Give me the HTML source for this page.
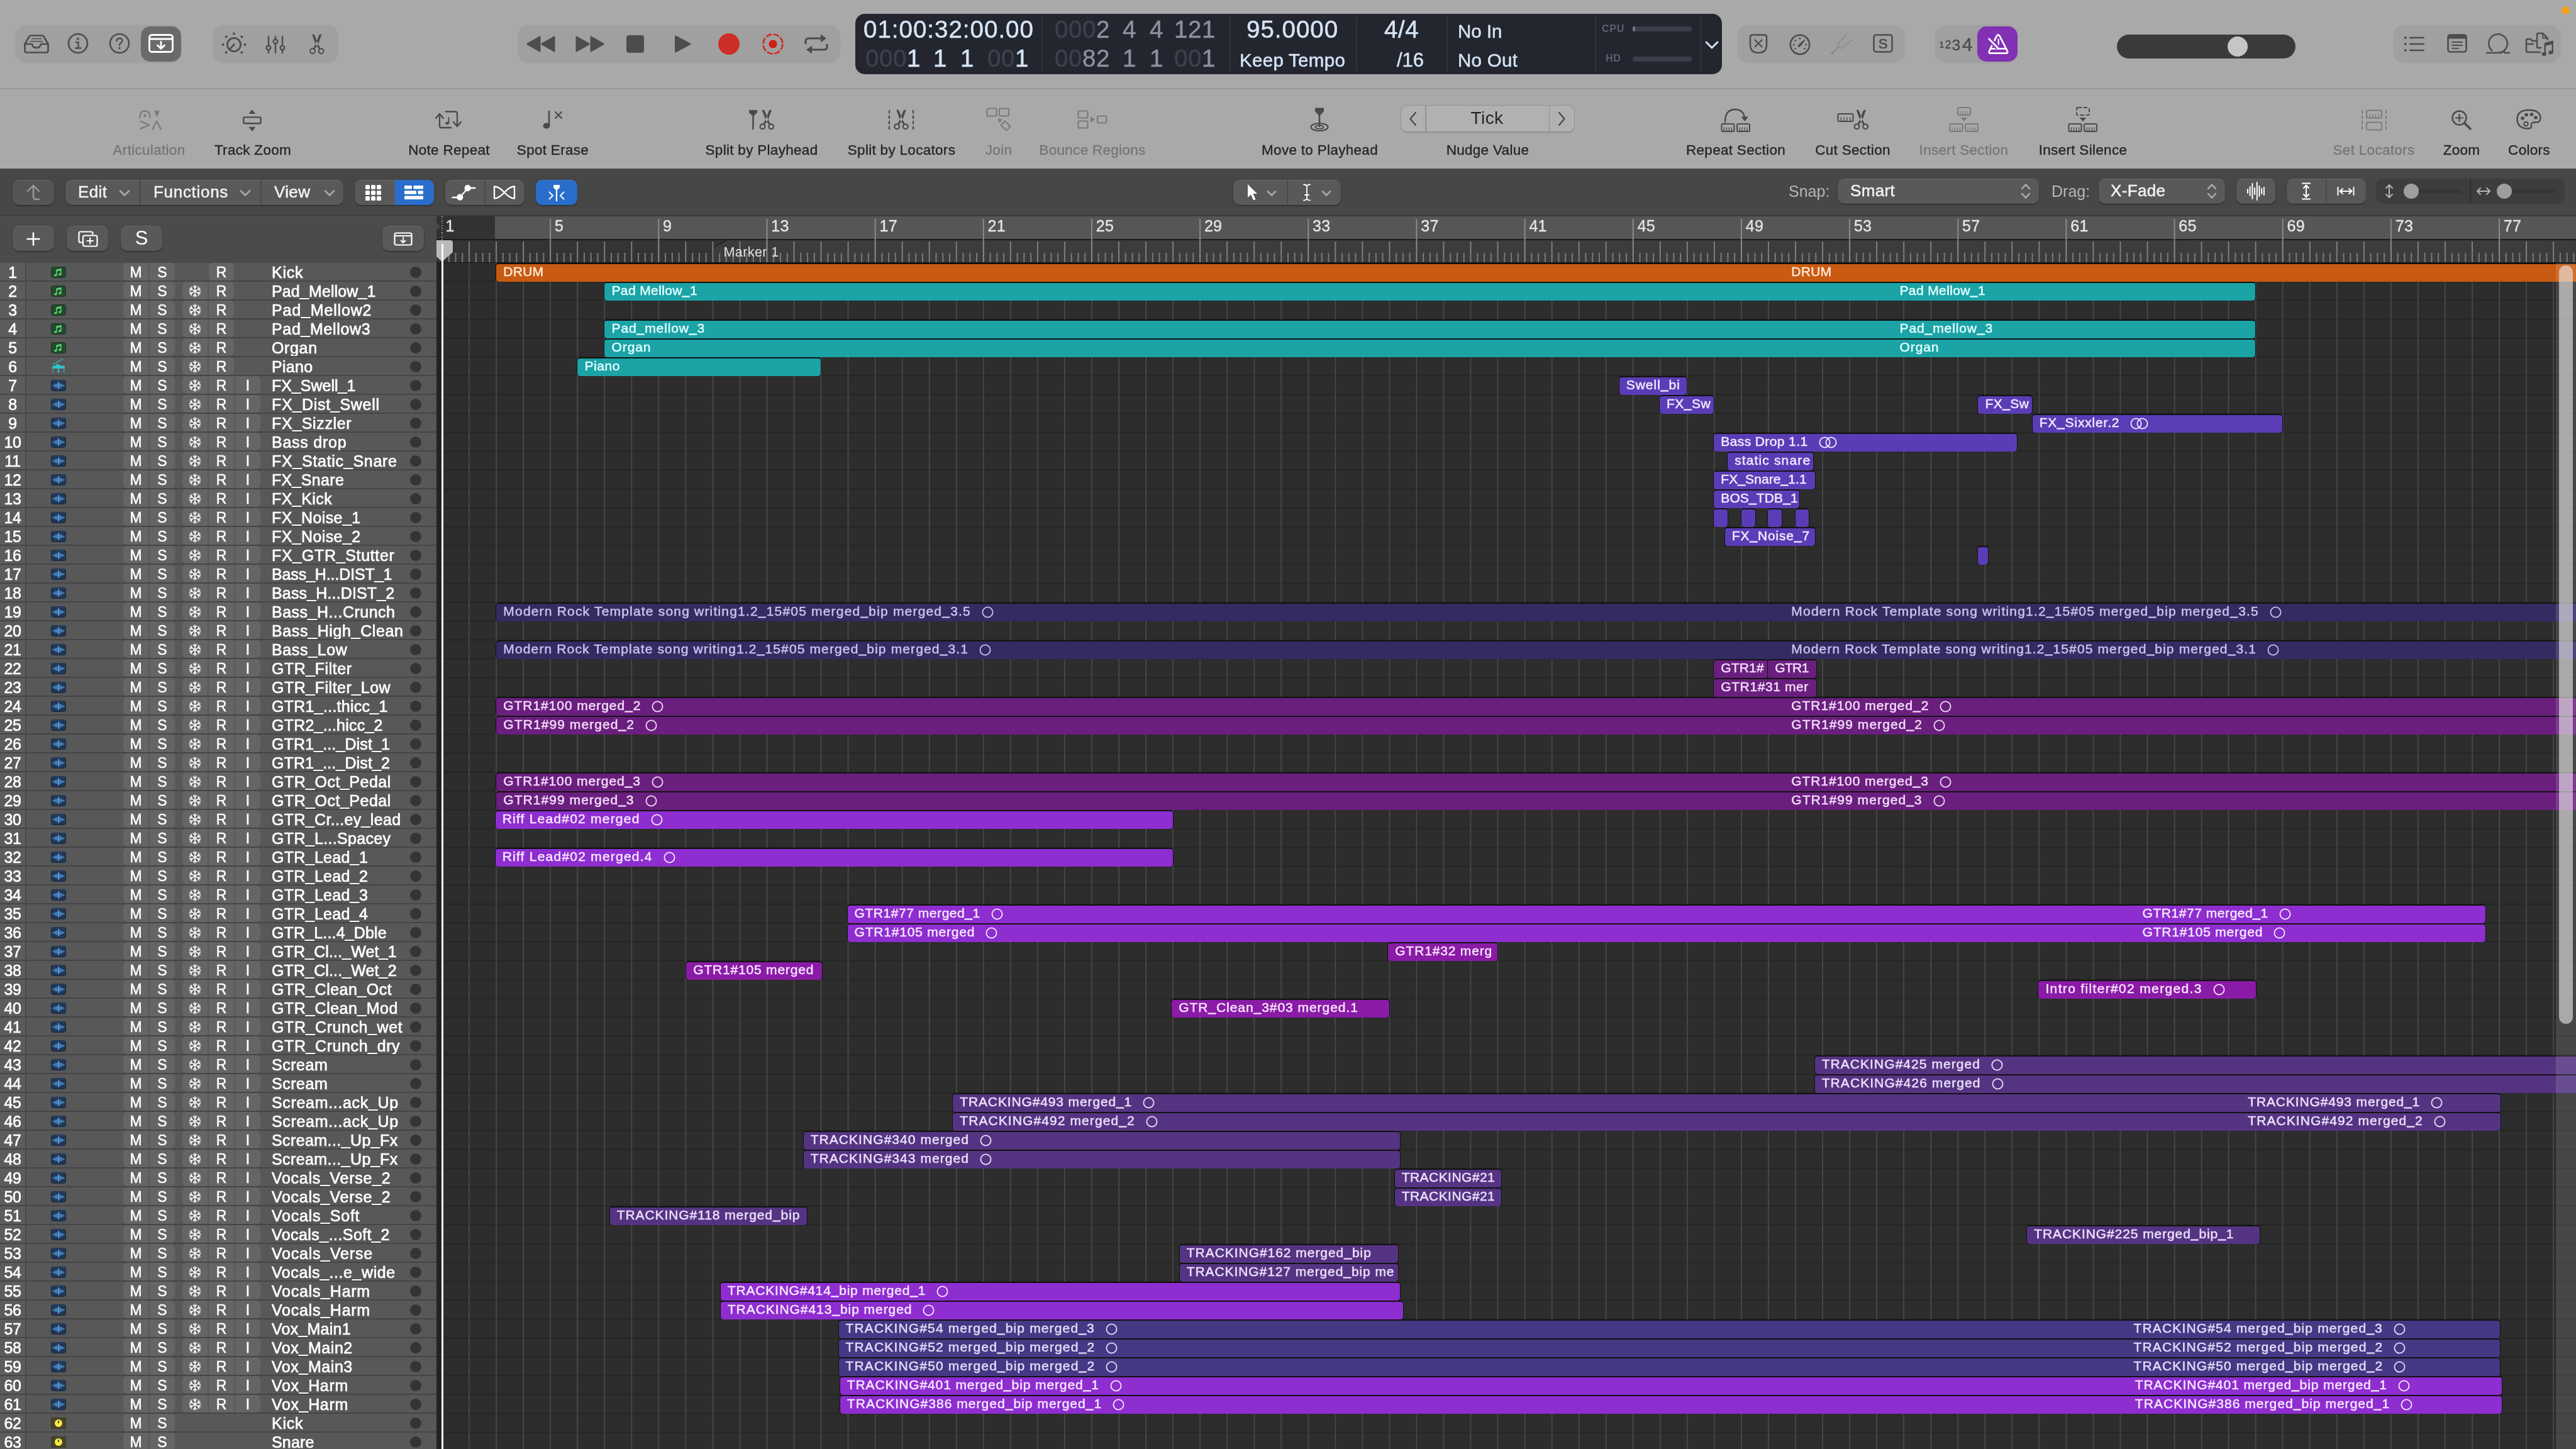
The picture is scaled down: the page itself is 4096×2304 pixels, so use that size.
<!DOCTYPE html>
<html><head><meta charset="utf-8"><title>Logic Pro</title>
<style>
*{box-sizing:border-box;margin:0;padding:0}
html,body{width:4096px;height:2304px;overflow:hidden;background:#2d2d2d}
body{font-family:"Liberation Sans",sans-serif;}
#root{position:relative;width:4096px;height:2304px;overflow:hidden;will-change:transform;transform:translateZ(0)}
.abs{position:absolute}
#top{position:absolute;left:0;top:0;width:4096px;height:268px;background:#a9a9a9}
#topline{position:absolute;left:0;top:140px;width:4096px;height:2px;background:#9a9a9a}
.grp{position:absolute;top:40px;height:60px;border-radius:17px;background:#a0a0a0;box-shadow:0 0 0 1px rgba(0,0,0,.025)}
.ico{position:absolute;overflow:visible}
.tl{-webkit-text-stroke:.35px currentColor;position:absolute;top:225px;font-size:22.5px;color:#262626;white-space:nowrap;transform:translateX(-50%);letter-spacing:.3px;line-height:28px}
.tl.dim{color:#767676}
#lcd{position:absolute;left:1360px;top:22px;width:1378px;height:96px;border-radius:15px;background:#23262f;overflow:hidden}
.lcdv{position:absolute;width:2px;top:4px;height:88px;background:#2f333d}
.big{-webkit-text-stroke:.5px currentColor;position:absolute;font-size:38.5px;line-height:40px;color:#d6e4f6;white-space:nowrap;letter-spacing:.6px}
.dg{-webkit-text-stroke:.5px currentColor;position:absolute;font-size:38.5px;line-height:40px;white-space:nowrap;text-align:right;letter-spacing:.6px}
.med{-webkit-text-stroke:.45px currentColor;position:absolute;font-size:29.5px;line-height:32px;color:#d6e4f6;white-space:nowrap}
.c1{color:#d6e4f6}.c2{color:#8b909e}.c0{color:#3d414c}
#mid{position:absolute;left:0;top:268px;width:4096px;height:75px;background:#474747}
.btn{position:absolute;background:#595959;border-radius:10px;box-shadow:0 1px 2px rgba(0,0,0,.5),inset 0 1px 0 rgba(255,255,255,.09)}
.mtxt{-webkit-text-stroke:.5px currentColor;position:absolute;font-size:26px;line-height:30px;color:#f2f2f2;white-space:nowrap;letter-spacing:.35px}
.lbl{position:absolute;font-size:25px;line-height:30px;color:#b5b5b5;white-space:nowrap}
#thead{position:absolute;left:0;top:343px;width:694px;height:75px;background:#4b4b4b}
#tlist{position:absolute;left:0;top:418px;width:694px;height:1886px;background:#585858;overflow:hidden}
.row{position:absolute;left:0;width:694px;height:30px}
.row:before{content:"";position:absolute;left:0;top:-2px;width:694px;height:2px;background:#454545}
.num{-webkit-text-stroke:.65px currentColor;position:absolute;left:0;top:0;width:42px;height:28px;background:#5c5c5c;border-right:2px solid #494949;color:#fff;font-size:25px;line-height:30px;text-align:center;letter-spacing:-.3px}
.b{-webkit-text-stroke:.5px currentColor;position:absolute;top:0;height:28px;background:#656565;color:#fff;font-size:23px;line-height:30px;text-align:center}
.nm{-webkit-text-stroke:.7px currentColor;position:absolute;left:432px;top:1px;font-size:25px;line-height:28px;color:#fff;white-space:nowrap;letter-spacing:.45px}
.u{position:relative;top:-1.500px;-webkit-text-stroke:.9px currentColor}
.rt .u{top:-1px;-webkit-text-stroke:.7px currentColor}
.dot{position:absolute;left:652px;top:6px;width:18px;height:18px;border-radius:50%;background:#343434}
.ti{position:absolute;left:81px;top:6px;width:24px;height:18px;border-radius:3px}
#arr{position:absolute;left:694px;top:418px;width:3402px;height:1886px;background:#2d2d2d;overflow:hidden}
#ruler{position:absolute;left:694px;top:343px;width:3402px;height:75px;background:#343434;overflow:hidden}
.rg{position:absolute;height:30px;border:1.5px solid #121212;border-top-width:2px;border-bottom-width:0;border-radius:5px;overflow:hidden;white-space:nowrap}
.rt{-webkit-text-stroke:.5px currentColor;position:absolute;top:-1px;font-size:21px;line-height:26px;white-space:nowrap;letter-spacing:.55px}
.rt svg{vertical-align:-3.500px;margin-left:17px}
.rn{-webkit-text-stroke:.4px currentColor;position:absolute;top:1px;font-size:25px;line-height:30px;color:#e4e4e4;letter-spacing:.3px}
</style></head><body><div id="root">
<div id="top"><div id="topline"></div><div class="grp" style="left:25px;width:263px"></div><div class="abs" style="left:224px;top:42px;width:64px;height:56px;border-radius:15px;background:#6a6a6a"></div><svg class="ico" style="left:36px;top:54px" width="44" height="32" viewBox="0 0 44 32" ><g fill="none" stroke="#4d4d4d" stroke-width="2.700" stroke-linejoin="round" stroke-linecap="round"><path d="M3.500 16 L10.500 4 Q11.500 2.500 13.500 2.500 L30.500 2.500 Q32.500 2.500 33.500 4 L40.500 16 L40.500 26.500 Q40.500 29.500 37.500 29.500 L6.500 29.500 Q3.500 29.500 3.500 26.500 Z"/><path d="M3.500 16 L15 16 Q16 22 22 22 Q28 22 29 16 L40.500 16"/><path d="M14.500 7.500 L29.500 7.500 M12 11.800 L32 11.800" stroke-width="1.600"/></g></svg><svg class="ico" style="left:106px;top:51px" width="36" height="36" viewBox="0 0 36 36" ><circle cx="18" cy="18" r="15" fill="none" stroke="#4d4d4d" stroke-width="2.600"/><circle cx="18" cy="10.800" r="2" fill="#4d4d4d"/><path d="M14.800 16.200 L18.600 16.200 L18.600 25 M14 25.500 L22.500 25.500" fill="none" stroke="#4d4d4d" stroke-width="2.400" stroke-linecap="round"/></svg><svg class="ico" style="left:172px;top:51px" width="36" height="36" viewBox="0 0 36 36" ><circle cx="18" cy="18" r="15" fill="none" stroke="#4d4d4d" stroke-width="2.600"/><path d="M13.500 14 Q13.800 10 18 10 Q22.500 10 22.500 13.600 Q22.500 16 20 17.500 Q18 18.700 18 21" fill="none" stroke="#4d4d4d" stroke-width="2.400" stroke-linecap="round"/><circle cx="18" cy="25.500" r="1.700" fill="#4d4d4d"/></svg><svg class="ico" style="left:235px;top:53px" width="42" height="32" viewBox="0 0 42 32" ><rect x="2.500" y="2.500" width="37" height="27" rx="4" fill="none" stroke="#fff" stroke-width="2.900"/><path d="M2.500 9 L39.500 9" stroke="#fff" stroke-width="2.800"/><path d="M21 13.500 L21 24 M15.500 19 L21 24.500 L26.500 19" fill="none" stroke="#fff" stroke-width="2.800" stroke-linecap="round" stroke-linejoin="round"/></svg><div class="grp" style="left:339px;width:198px"></div><svg class="ico" style="left:352px;top:49.5px" width="40" height="42" viewBox="0 0 40 42" ><circle cx="20" cy="21" r="10.600" fill="none" stroke="#4d4d4d" stroke-width="2.700"/><path d="M13.400 28 L20.500 20.500" stroke="#4d4d4d" stroke-width="2.600" stroke-linecap="round"/><circle cx="20.0" cy="3.5" r="2" fill="#4d4d4d"/><circle cx="32.4" cy="8.6" r="2" fill="#4d4d4d"/><circle cx="37.5" cy="21.0" r="2" fill="#4d4d4d"/><circle cx="32.4" cy="33.4" r="2" fill="#4d4d4d"/><circle cx="7.6" cy="33.4" r="2" fill="#4d4d4d"/><circle cx="2.5" cy="21.0" r="2" fill="#4d4d4d"/><circle cx="7.6" cy="8.6" r="2" fill="#4d4d4d"/></svg><svg class="ico" style="left:422px;top:55px" width="32" height="32" viewBox="0 0 32 32" ><g stroke="#4d4d4d" stroke-width="2.400" stroke-linecap="round" fill="#a3a3a3"><path d="M5 3 L5 29 M16 3 L16 29 M27 3 L27 29"/><circle cx="5" cy="21" r="3.300"/><circle cx="16" cy="11" r="3.300"/><circle cx="27" cy="21" r="3.300"/></g></svg><svg class="ico" style="left:490px;top:53px" width="28" height="34" viewBox="0 0 28 34" ><path d="M6 1.500 L10 2.200 L15.800 16.600 L19.500 24.200 L17.500 25.500 L11.900 18 Z M21.600 1.500 L17.600 2.200 L11.800 16.600 L8.100 24.200 L10.100 25.500 L15.700 18 Z" fill="#4d4d4d"/><circle cx="7" cy="28.200" r="3.900" fill="none" stroke="#4d4d4d" stroke-width="2.100"/><circle cx="20.600" cy="28.200" r="3.900" fill="none" stroke="#4d4d4d" stroke-width="2.100"/><circle cx="13.800" cy="17.300" r="0.900" fill="#a0a0a0"/></svg><div class="grp" style="left:824px;width:512px"></div><svg class="ico" style="left:836px;top:56px" width="48" height="28" viewBox="0 0 48 28" ><path d="M22 1.5 Q23.5 0.5 23.5 2.5 L23.5 25.5 Q23.5 27.5 22 26.5 L2 15.2 Q0.5 14 2 12.8 Z M45 1.5 Q46.5 0.5 46.5 2.5 L46.5 25.5 Q46.5 27.5 45 26.5 L25 15.2 Q23.5 14 25 12.8 Z" fill="#4d4d4d"/></svg><svg class="ico" style="left:914px;top:56px" width="48" height="28" viewBox="0 0 48 28" ><path d="M3 1.5 Q1.5 0.5 1.5 2.5 L1.5 25.5 Q1.5 27.5 3 26.5 L23 15.2 Q24.5 14 23 12.8 Z M26 1.5 Q24.5 0.5 24.5 2.5 L24.5 25.5 Q24.5 27.5 26 26.5 L46 15.2 Q47.5 14 46 12.8 Z" fill="#4d4d4d"/></svg><div class="abs" style="left:996px;top:56px;width:28px;height:28px;border-radius:4px;background:#4d4d4d"></div><svg class="ico" style="left:1072px;top:55px" width="28" height="30" viewBox="0 0 28 30" ><path d="M3 1.8 Q1 0.6 1 3 L1 27 Q1 29.4 3 28.2 L25.5 16.3 Q27.5 15 25.5 13.7 Z" fill="#4d4d4d"/></svg><div class="abs" style="left:1142px;top:53px;width:34px;height:34px;border-radius:50%;background:#cb2f28"></div><svg class="ico" style="left:1209.5px;top:51px" width="38" height="38" viewBox="0 0 38 38" ><circle cx="19" cy="19" r="15.5" fill="none" stroke="#cf2a22" stroke-width="2.6" stroke-dasharray="9.6 2.6"/><circle cx="19" cy="19" r="6.6" fill="#d01c14"/></svg><svg class="ico" style="left:1279px;top:54px" width="38" height="32" viewBox="0 0 38 32" ><g fill="none" stroke="#4d4d4d" stroke-width="3.2" stroke-linecap="round" stroke-linejoin="round"><path d="M2 15 L2 12 Q2 7 7 7 L30 7"/><path d="M36 17 L36 20 Q36 25 31 25 L8 25"/></g><path d="M26 0.5 L35 7 L26 13.5 Z M12 18.5 L3 25 L12 31.5 Z" fill="#4d4d4d"/></svg><div id="lcd"><div class="lcdv" style="left:296px"></div><div class="lcdv" style="left:595px"></div><div class="lcdv" style="left:796px"></div><div class="lcdv" style="left:940px"></div><div class="lcdv" style="left:1176px"></div><div class="lcdv" style="left:1343px"></div><div class="big" style="left:13px;top:5px;letter-spacing:1px">01:00:32:00.00</div><div class="dg" style="right:1274px;top:51px"><span class="c0">000</span><span class="c1">1</span></div><div class="dg" style="right:1232px;top:51px"><span class="c0"></span><span class="c1">1</span></div><div class="dg" style="right:1189px;top:51px"><span class="c0"></span><span class="c1">1</span></div><div class="dg" style="right:1102px;top:51px"><span class="c0">00</span><span class="c1">1</span></div><div class="dg" style="right:973px;top:5px"><span class="c0">000</span><span class="c2">2</span></div><div class="dg" style="right:931px;top:5px"><span class="c0"></span><span class="c2">4</span></div><div class="dg" style="right:888px;top:5px"><span class="c0"></span><span class="c2">4</span></div><div class="dg" style="right:805px;top:5px"><span class="c0"></span><span class="c2">121</span></div><div class="dg" style="right:973px;top:51px"><span class="c0">00</span><span class="c2">82</span></div><div class="dg" style="right:931px;top:51px"><span class="c0"></span><span class="c2">1</span></div><div class="dg" style="right:888px;top:51px"><span class="c0"></span><span class="c2">1</span></div><div class="dg" style="right:805px;top:51px"><span class="c0">00</span><span class="c2">1</span></div><div class="big" style="left:622px;top:5px;letter-spacing:1px">95.0000</div><div class="med" style="left:611px;top:57.500px;letter-spacing:.3px">Keep Tempo</div><div class="big" style="left:841px;top:5px">4/4</div><div class="med" style="left:861px;top:57.500px;font-size:31px">/16</div><div class="med" style="left:958px;top:11.500px">No In</div><div class="med" style="left:958px;top:57.500px;letter-spacing:.3px">No Out</div><div class="abs" style="left:1187px;top:15px;font-size:16px;font-weight:bold;color:#596073;letter-spacing:.8px">CPU</div><div class="abs" style="left:1193px;top:62px;font-size:16px;font-weight:bold;color:#596073;letter-spacing:.8px">HD</div><div class="abs" style="left:1236px;top:20px;width:94px;height:8px;border-radius:4px;background:#3a3e4b"></div><div class="abs" style="left:1236px;top:20px;width:4px;height:8px;border-radius:2px;background:#6b7489"></div><div class="abs" style="left:1236px;top:68px;width:94px;height:8px;border-radius:4px;background:#3a3e4b"></div><svg class="ico" style="left:1351px;top:43px" width="22" height="14" viewBox="0 0 22 14" ><path d="M2 2 L11 11 L20 2" fill="none" stroke="#d6e4f6" stroke-width="3" stroke-linecap="round" stroke-linejoin="round"/></svg></div><div class="grp" style="left:2763px;width:265px"></div><svg class="ico" style="left:2780px;top:53px" width="32" height="34" viewBox="0 0 32 34" ><path d="M3 6 Q3 2.500 6.500 2.500 L25.500 2.500 Q29 2.500 29 6 L29 18 Q29 31 16 31 Q3 31 3 18 Z" fill="none" stroke="#4d4d4d" stroke-width="2.500" stroke-linejoin="round"/><path d="M10.500 10.500 L21.500 21.500 M21.500 10.500 L10.500 21.500" stroke="#4d4d4d" stroke-width="2.200" stroke-linecap="round"/></svg><svg class="ico" style="left:2844px;top:53px" width="36" height="36" viewBox="0 0 36 36" ><circle cx="18" cy="18" r="15.200" fill="none" stroke="#4d4d4d" stroke-width="2.500"/><path d="M15.800 19.200 Q14.800 21.200 17 21 Q18.500 20.800 25.500 10.500 Q17 17.500 15.800 19.200 Z" fill="#4d4d4d" stroke="#4d4d4d" stroke-width="1.600" stroke-linejoin="round"/><circle cx="10.5" cy="24.3" r="1.400" fill="#4d4d4d"/><circle cx="8.2" cy="18.0" r="1.400" fill="#4d4d4d"/><circle cx="10.5" cy="11.7" r="1.400" fill="#4d4d4d"/><circle cx="18.0" cy="8.2" r="1.400" fill="#4d4d4d"/><circle cx="27.8" cy="18.0" r="1.400" fill="#4d4d4d"/><circle cx="25.5" cy="24.3" r="1.400" fill="#4d4d4d"/></svg><svg class="ico" style="left:2910px;top:51px" width="38" height="38" viewBox="0 0 38 38" ><g fill="none" stroke="#8e8e8e" stroke-linecap="round" stroke-linejoin="round"><path d="M3.500 33.500 L12.500 24.500" stroke-width="3"/><path d="M26 3 L12.500 19 L12.500 24.500 L19.500 25.500 L35 12" stroke-width="2.200"/></g><circle cx="3.500" cy="33.500" r="2.600" fill="#8e8e8e"/></svg><svg class="ico" style="left:2978px;top:54px" width="32" height="30" viewBox="0 0 32 30" ><rect x="1.500" y="1.500" width="29" height="27" rx="3.500" fill="none" stroke="#4d4d4d" stroke-width="2.500"/><text x="16" y="23" text-anchor="middle" font-family="Liberation Sans" font-size="22" fill="#4d4d4d" stroke="#4d4d4d" stroke-width=".700">S</text></svg><div class="grp" style="left:3077px;width:131px"></div><svg class="ico" style="left:3080px;top:50px" width="62" height="36" viewBox="0 0 62 36"><g font-family="Liberation Sans" fill="#4d4d4d" stroke="#4d4d4d" stroke-width=".5" text-anchor="middle"><text x="7.300" y="26.300" font-size="15">1</text><text x="17.600" y="26.600" font-size="17.500">2</text><text x="30.500" y="29.500" font-size="24">3</text><text x="48" y="31.300" font-size="30">4</text></g></svg><div class="abs" style="left:3144px;top:42px;width:64px;height:56px;border-radius:15px;background:#8230b4"></div><svg class="ico" style="left:3158px;top:53px" width="36" height="34" viewBox="0 0 36 34" ><g fill="none" stroke="#fff" stroke-width="2.700" stroke-linecap="round" stroke-linejoin="round"><path d="M16.800 4.400 Q19.200 0.200 21.600 4.400 L33.600 27.800 Q35.400 31.700 31.200 31.700 L7.600 31.700 Q3.400 31.700 5.200 27.800 Z"/><path d="M7 24.500 L32 24.500"/><path d="M4.600 8.700 L18.600 23" stroke="#8230b4" stroke-width="7" stroke-linecap="butt"/><path d="M4.600 8.700 L19.500 24"/><path d="M19.600 9.500 L19.800 17.500" stroke-width="2.200"/></g></svg><div class="abs" style="left:3366px;top:55px;width:284px;height:38px;border-radius:19px;background:#3a3a3a"></div><div class="abs" style="left:3542px;top:58px;width:32px;height:32px;border-radius:50%;background:#c5c5c5"></div><div class="abs" style="left:4073px;top:10px;width:13px;height:13px;border-radius:50%;background:#f5a11f"></div><div class="grp" style="left:3806px;width:265px"></div><svg class="ico" style="left:3822px;top:57px" width="34" height="26" viewBox="0 0 34 26" ><g stroke="#4d4d4d" stroke-width="2.300" stroke-linecap="round"><path d="M10 3 L32 3 M10 13 L32 13 M10 23 L32 23"/></g><circle cx="2.800" cy="3" r="2" fill="#4d4d4d"/><circle cx="2.800" cy="13" r="2" fill="#4d4d4d"/><circle cx="2.800" cy="23" r="2" fill="#4d4d4d"/></svg><svg class="ico" style="left:3891px;top:54px" width="32" height="30" viewBox="0 0 32 30" ><rect x="1.500" y="1.500" width="29" height="27" rx="3.500" fill="none" stroke="#4d4d4d" stroke-width="2.600"/><path d="M1.500 4 Q1.500 1.500 4 1.500 L28 1.500 Q30.500 1.500 30.500 4 L30.500 7.500 L1.500 7.500 Z" fill="#4d4d4d"/><path d="M7.500 13 L25 13 M7.500 18 L25 18 M7.500 22.800 L19 22.800" stroke="#4d4d4d" stroke-width="1.800"/></svg><svg class="ico" style="left:3952px;top:52px" width="40" height="34" viewBox="0 0 40 34" ><g fill="none" stroke="#4d4d4d" stroke-width="2.500" stroke-linecap="round"><path d="M2 32 L20 32 A14.800 14.800 0 1 0 10.500 28.500"/><path d="M20 32 Q27 32 30 29"/><path d="M30.500 32 L38 32"/></g></svg><svg class="ico" style="left:4015px;top:50px" width="46" height="40" viewBox="0 0 46 40" ><g fill="none" stroke="#4d4d4d" stroke-width="2.500" stroke-linejoin="round" stroke-linecap="round"><path d="M19 24 L19 5 Q19 3 21 3 L28 3 L35.500 10.500 L35.500 13"/><path d="M28 3 L28 10.500 L35.500 10.500" stroke-width="1.800"/><path d="M19 24 Q19 26 21 26 L25 26"/><path d="M24 33 L4 33 Q2 33 2 31 L2 14 Q2 12 4 12 L9 12 L11 15 L18 15"/><path d="M2 20 L13 20"/></g><g fill="#4d4d4d"><ellipse cx="30.300" cy="36" rx="3.700" ry="3"/><ellipse cx="40.800" cy="33.500" rx="3.700" ry="3"/><path d="M32.500 36 L32.500 22.500 L43 19.800 L43 33.500 L44.500 33.500 L44.500 15 L31 18.500 L31 36 Z" stroke="#4d4d4d" stroke-width="1"/></g></svg><div class="tl dim" style="left:237px">Articulation</div><div class="tl" style="left:402px">Track Zoom</div><div class="tl" style="left:714px">Note Repeat</div><div class="tl" style="left:879px">Spot Erase</div><div class="tl" style="left:1211px">Split by Playhead</div><div class="tl" style="left:1433.5px">Split by Locators</div><div class="tl dim" style="left:1588px">Join</div><div class="tl dim" style="left:1737px">Bounce Regions</div><div class="tl" style="left:2098.5px">Move to Playhead</div><div class="tl" style="left:2365.5px">Nudge Value</div><div class="tl" style="left:2760px">Repeat Section</div><div class="tl" style="left:2946px">Cut Section</div><div class="tl dim" style="left:3122.5px">Insert Section</div><div class="tl" style="left:3312px">Insert Silence</div><div class="tl dim" style="left:3774.5px">Set Locators</div><div class="tl" style="left:3914px">Zoom</div><div class="tl" style="left:4021.5px">Colors</div><svg class="ico" style="left:216px;top:171px" width="42" height="38" viewBox="0 0 42 38" ><g fill="none" stroke="#7b7b7b" stroke-width="2.300" stroke-linecap="round" stroke-linejoin="round"><path d="M6.400 16 Q6.400 5.400 14.500 5.400 Q22.500 5.400 22.500 16"/><path d="M7.400 21.800 L21.300 27.700 L7.400 33.600"/><path d="M26.600 34.400 L33.200 21.400 L39.800 34.400"/></g><circle cx="14.400" cy="13" r="2.200" fill="#7b7b7b"/><path d="M29.100 5.300 L37.800 5.300 L33.500 15.300 Z" fill="#7b7b7b"/></svg><svg class="ico" style="left:385px;top:172px" width="32" height="38" viewBox="0 0 32 38" ><rect x="2.300" y="14.400" width="27.300" height="9.900" rx="2" fill="none" stroke="#4a4a4a" stroke-width="2.400"/><path d="M15.900 3 L20.600 8.500 L11.200 8.500 Z M15.900 36.200 L20.600 30.200 L11.200 30.200 Z" fill="#4a4a4a" stroke="#4a4a4a" stroke-width="1" stroke-linejoin="round"/></svg><svg class="ico" style="left:691px;top:175px" width="44" height="32" viewBox="0 0 44 32" ><g fill="none" stroke="#4a4a4a" stroke-width="2.300" stroke-linecap="round" stroke-linejoin="round"><path d="M8 8 L8 25 Q8 28 11 28 L26 28"/><path d="M2 13 L8 6 L14 13"/><path d="M36 24 L36 5.500 Q36 2.500 33 2.500 L17.500 2.500"/><path d="M30 19 L36 26 L42 19"/></g><ellipse cx="20" cy="21" rx="2.800" ry="2.200" fill="#4a4a4a"/><path d="M22.500 21 L22.500 11" stroke="#4a4a4a" stroke-width="1.800"/></svg><svg class="ico" style="left:862px;top:174px" width="34" height="32" viewBox="0 0 34 32" ><ellipse cx="7" cy="26" rx="5.500" ry="4.500" fill="#4a4a4a"/><path d="M11 26 L11 3" stroke="#4a4a4a" stroke-width="2.600" stroke-linecap="round"/><path d="M21 4 L31 14 M31 4 L21 14" stroke="#4a4a4a" stroke-width="2.200" stroke-linecap="round"/></svg><svg class="ico" style="left:1190px;top:173px" width="42" height="34" viewBox="0 0 42 34" ><path d="M1 2 L14 2 L14 6 L9 11 L6 11 L1 6 Z" fill="#4a4a4a"/><path d="M7.500 8 L7.500 32" stroke="#4a4a4a" stroke-width="2.600" stroke-linecap="round"/><g transform="translate(15.5 0) scale(1)"><path d="M6 1.500 L10 2.200 L15.800 16.600 L19.500 24.200 L17.500 25.500 L11.900 18 Z M21.600 1.500 L17.600 2.200 L11.800 16.600 L8.100 24.200 L10.100 25.500 L15.700 18 Z" fill="#4a4a4a"/><circle cx="7" cy="28.200" r="3.900" fill="none" stroke="#4a4a4a" stroke-width="2.200"/><circle cx="20.600" cy="28.200" r="3.900" fill="none" stroke="#4a4a4a" stroke-width="2.200"/></g></svg><svg class="ico" style="left:1412px;top:173px" width="42" height="34" viewBox="0 0 42 34" ><path d="M2 2 L2 33 M40 2 L40 33" stroke="#4a4a4a" stroke-width="2.200" stroke-dasharray="5.500 3"/><g transform="translate(7.2 0) scale(1)"><path d="M6 1.500 L10 2.200 L15.800 16.600 L19.500 24.200 L17.500 25.500 L11.900 18 Z M21.600 1.500 L17.600 2.200 L11.800 16.600 L8.100 24.200 L10.100 25.500 L15.700 18 Z" fill="#4a4a4a"/><circle cx="7" cy="28.200" r="3.900" fill="none" stroke="#4a4a4a" stroke-width="2.200"/><circle cx="20.600" cy="28.200" r="3.900" fill="none" stroke="#4a4a4a" stroke-width="2.200"/></g></svg><svg class="ico" style="left:1568px;top:171px" width="40" height="38" viewBox="0 0 40 38" ><g fill="none" stroke="#7b7b7b" stroke-width="2.200" stroke-linejoin="round"><rect x="1.500" y="1.500" width="15" height="12" rx="2"/><rect x="21" y="1.500" width="15" height="12" rx="2"/><path d="M30 21.500 L38.500 30 L32 36.500 L23.500 28 Z"/></g><path d="M18 17 L26 19 L21 24.500 Z" fill="#7b7b7b"/></svg><svg class="ico" style="left:1713px;top:175px" width="48" height="30" viewBox="0 0 48 30" ><g fill="none" stroke="#7b7b7b" stroke-width="2.200" stroke-linejoin="round"><rect x="1.500" y="1.500" width="15" height="11" rx="2"/><rect x="1.500" y="17.500" width="15" height="11" rx="2"/><rect x="32" y="9.500" width="14.500" height="11" rx="2"/></g><path d="M21 10 L28 15 L21 20 Z" fill="#7b7b7b"/></svg><svg class="ico" style="left:2082px;top:170px" width="32" height="40" viewBox="0 0 32 40" ><path d="M9 1.500 L23 1.500 L23 7 L18 12.500 L14 12.500 L9 7 Z" fill="#4a4a4a"/><path d="M16 10 L16 32" stroke="#4a4a4a" stroke-width="2.600"/><ellipse cx="16" cy="32" rx="13.500" ry="6" fill="none" stroke="#4a4a4a" stroke-width="2.200"/><ellipse cx="16" cy="32" rx="6.500" ry="2.800" fill="none" stroke="#4a4a4a" stroke-width="1.800"/></svg><div class="abs" style="left:2228px;top:168px;width:275px;height:41px;border-radius:9px;background:#b1b1b1;box-shadow:0 0 0 1px #929292,0 1.500px 2px rgba(0,0,0,.18)"></div><div class="abs" style="left:2266px;top:168px;width:1.500px;height:41px;background:#8f8f8f"></div><div class="abs" style="left:2462.500px;top:168px;width:1.500px;height:41px;background:#8f8f8f"></div><div class="abs" style="left:2266px;top:172px;width:197px;text-align:center;font-size:28px;line-height:32px;color:#262626;letter-spacing:.4px">Tick</div><svg class="ico" style="left:2240px;top:176.5px" width="14" height="24" viewBox="0 0 14 24" ><path d="M11 2 L2.500 12 L11 22" fill="none" stroke="#4a4a4a" stroke-width="2.200" stroke-linecap="round" stroke-linejoin="round"/></svg><svg class="ico" style="left:2476px;top:176.5px" width="14" height="24" viewBox="0 0 14 24" ><path d="M3 2 L11.500 12 L3 22" fill="none" stroke="#4a4a4a" stroke-width="2.200" stroke-linecap="round" stroke-linejoin="round"/></svg><svg class="ico" style="left:2736px;top:170px" width="48" height="40" viewBox="0 0 48 40" ><path d="M7 24 Q7 4 23 4 Q36 4 38 17" fill="none" stroke="#4a4a4a" stroke-width="2.400" stroke-linecap="round"/><path d="M32.500 15.500 L44 15.500 L38.500 23 Z" fill="#4a4a4a"/><rect x="1.5" y="27" width="20" height="12" rx="2" fill="none" stroke="#4a4a4a" stroke-width="2"/><path d="M5.5 32.5 L5.5 39" stroke="#4a4a4a" stroke-width="1.300"/><path d="M9.5 32.5 L9.5 39" stroke="#4a4a4a" stroke-width="1.300"/><path d="M13.5 32.5 L13.5 39" stroke="#4a4a4a" stroke-width="1.300"/><path d="M17.5 32.5 L17.5 39" stroke="#4a4a4a" stroke-width="1.300"/><rect x="26" y="27" width="20" height="12" rx="2" fill="none" stroke="#4a4a4a" stroke-width="2"/><path d="M30.0 32.5 L30.0 39" stroke="#4a4a4a" stroke-width="1.300"/><path d="M34.0 32.5 L34.0 39" stroke="#4a4a4a" stroke-width="1.300"/><path d="M38.0 32.5 L38.0 39" stroke="#4a4a4a" stroke-width="1.300"/><path d="M42.0 32.5 L42.0 39" stroke="#4a4a4a" stroke-width="1.300"/></svg><svg class="ico" style="left:2921px;top:173px" width="50" height="34" viewBox="0 0 50 34" ><rect x="1.5" y="8" width="24" height="12" rx="2" fill="none" stroke="#4a4a4a" stroke-width="2"/><path d="M6.3 13.5 L6.3 20" stroke="#4a4a4a" stroke-width="1.300"/><path d="M11.1 13.5 L11.1 20" stroke="#4a4a4a" stroke-width="1.300"/><path d="M15.9 13.5 L15.9 20" stroke="#4a4a4a" stroke-width="1.300"/><path d="M20.7 13.5 L20.7 20" stroke="#4a4a4a" stroke-width="1.300"/><g transform="translate(24.5 0) scale(1)"><path d="M6 1.500 L10 2.200 L15.800 16.600 L19.500 24.200 L17.500 25.500 L11.900 18 Z M21.600 1.500 L17.600 2.200 L11.800 16.600 L8.100 24.200 L10.100 25.500 L15.700 18 Z" fill="#4a4a4a"/><circle cx="7" cy="28.200" r="3.900" fill="none" stroke="#4a4a4a" stroke-width="2.200"/><circle cx="20.600" cy="28.200" r="3.900" fill="none" stroke="#4a4a4a" stroke-width="2.200"/></g></svg><svg class="ico" style="left:3099px;top:170px" width="48" height="40" viewBox="0 0 48 40" ><rect x="14" y="1" width="20" height="12" rx="2" fill="none" stroke="#7b7b7b" stroke-width="2"/><path d="M18.0 6.5 L18.0 13" stroke="#7b7b7b" stroke-width="1.300"/><path d="M22.0 6.5 L22.0 13" stroke="#7b7b7b" stroke-width="1.300"/><path d="M26.0 6.5 L26.0 13" stroke="#7b7b7b" stroke-width="1.300"/><path d="M30.0 6.5 L30.0 13" stroke="#7b7b7b" stroke-width="1.300"/><path d="M18.500 17 L29.500 17 L24 23 Z" fill="#7b7b7b"/><rect x="1.5" y="27" width="20" height="12" rx="2" fill="none" stroke="#7b7b7b" stroke-width="2"/><path d="M5.5 32.5 L5.5 39" stroke="#7b7b7b" stroke-width="1.300"/><path d="M9.5 32.5 L9.5 39" stroke="#7b7b7b" stroke-width="1.300"/><path d="M13.5 32.5 L13.5 39" stroke="#7b7b7b" stroke-width="1.300"/><path d="M17.5 32.5 L17.5 39" stroke="#7b7b7b" stroke-width="1.300"/><rect x="26" y="27" width="20" height="12" rx="2" fill="none" stroke="#7b7b7b" stroke-width="2"/><path d="M30.0 32.5 L30.0 39" stroke="#7b7b7b" stroke-width="1.300"/><path d="M34.0 32.5 L34.0 39" stroke="#7b7b7b" stroke-width="1.300"/><path d="M38.0 32.5 L38.0 39" stroke="#7b7b7b" stroke-width="1.300"/><path d="M42.0 32.5 L42.0 39" stroke="#7b7b7b" stroke-width="1.300"/></svg><svg class="ico" style="left:3288px;top:170px" width="48" height="40" viewBox="0 0 48 40" ><rect x="14" y="1" width="20" height="12" rx="2" fill="none" stroke="#4a4a4a" stroke-width="2" stroke-dasharray="6 3"/><path d="M18.500 17 L29.500 17 L24 23 Z" fill="#4a4a4a"/><rect x="1.5" y="27" width="20" height="12" rx="2" fill="none" stroke="#4a4a4a" stroke-width="2"/><path d="M5.5 32.5 L5.5 39" stroke="#4a4a4a" stroke-width="1.300"/><path d="M9.5 32.5 L9.5 39" stroke="#4a4a4a" stroke-width="1.300"/><path d="M13.5 32.5 L13.5 39" stroke="#4a4a4a" stroke-width="1.300"/><path d="M17.5 32.5 L17.5 39" stroke="#4a4a4a" stroke-width="1.300"/><rect x="26" y="27" width="20" height="12" rx="2" fill="none" stroke="#4a4a4a" stroke-width="2"/><path d="M30.0 32.5 L30.0 39" stroke="#4a4a4a" stroke-width="1.300"/><path d="M34.0 32.5 L34.0 39" stroke="#4a4a4a" stroke-width="1.300"/><path d="M38.0 32.5 L38.0 39" stroke="#4a4a4a" stroke-width="1.300"/><path d="M42.0 32.5 L42.0 39" stroke="#4a4a4a" stroke-width="1.300"/></svg><svg class="ico" style="left:3754px;top:174px" width="42" height="34" viewBox="0 0 42 34" ><path d="M2 1 L2 33 M40 1 L40 33" stroke="#7b7b7b" stroke-width="2" stroke-dasharray="5.500 3"/><rect x="9" y="1.5" width="24" height="12" rx="2" fill="none" stroke="#7b7b7b" stroke-width="2"/><path d="M13.8 7 L13.8 13.5" stroke="#7b7b7b" stroke-width="1.300"/><path d="M18.6 7 L18.6 13.5" stroke="#7b7b7b" stroke-width="1.300"/><path d="M23.4 7 L23.4 13.5" stroke="#7b7b7b" stroke-width="1.300"/><path d="M28.2 7 L28.2 13.5" stroke="#7b7b7b" stroke-width="1.300"/><rect x="9" y="20.500" width="24" height="12" rx="2" fill="none" stroke="#7b7b7b" stroke-width="1.800"/></svg><svg class="ico" style="left:3897px;top:174px" width="34" height="34" viewBox="0 0 34 34" ><circle cx="13.500" cy="13.500" r="11" fill="none" stroke="#4a4a4a" stroke-width="2.400"/><path d="M22 22 L31 31" stroke="#4a4a4a" stroke-width="3.400" stroke-linecap="round"/><path d="M13.500 8 L13.500 19 M8 13.500 L19 13.500" stroke="#4a4a4a" stroke-width="2.200" stroke-linecap="round"/></svg><svg class="ico" style="left:4000px;top:173px" width="42" height="34" viewBox="0 0 42 34" ><path d="M21 2 Q3 2 2.500 16 Q2.500 31 19 31.500 Q26 31.500 25 26.500 Q24 21.500 30 21.500 L34 21.500 Q39.500 21 39.500 14 Q38.500 2 21 2 Z" fill="none" stroke="#4a4a4a" stroke-width="2.400"/><circle cx="11" cy="15" r="2.800" fill="#4a4a4a"/><circle cx="17" cy="9.500" r="2.800" fill="#4a4a4a"/><circle cx="25.500" cy="9" r="2.800" fill="#4a4a4a"/><circle cx="32" cy="14" r="2.800" fill="#4a4a4a"/><circle cx="16.500" cy="24" r="3.200" fill="none" stroke="#4a4a4a" stroke-width="2"/></svg></div><div id="mid"><div class="btn" style="left:20px;top:18px;width:66px;height:40px;background:#555"></div><svg class="ico" style="left:41px;top:25px" width="24" height="26" viewBox="0 0 24 26" ><path d="M12 2 L12 19 Q12 24 17 24 L21 24 M3 11 L12 2 L21 11" fill="none" stroke="#9a9a9a" stroke-width="2.400" stroke-linecap="round" stroke-linejoin="round"/></svg><div class="btn" style="left:104px;top:18px;width:442px;height:40px"></div><div class="abs" style="left:222px;top:18px;width:2px;height:40px;background:#4a4a4a"></div><div class="abs" style="left:414px;top:18px;width:2px;height:40px;background:#4a4a4a"></div><div class="mtxt" style="left:124px;top:22px">Edit</div><div class="mtxt" style="left:244px;top:22px;letter-spacing:.7px">Functions</div><div class="mtxt" style="left:436px;top:22px">View</div><svg class="ico" style="left:189px;top:34px" width="18" height="10" viewBox="0 0 18 10" ><path d="M2 1.500 L9 8.5 L16 1.500" fill="none" stroke="#a8a8a8" stroke-width="2.6" stroke-linecap="round" stroke-linejoin="round"/></svg><svg class="ico" style="left:381px;top:34px" width="18" height="10" viewBox="0 0 18 10" ><path d="M2 1.500 L9 8.5 L16 1.500" fill="none" stroke="#a8a8a8" stroke-width="2.6" stroke-linecap="round" stroke-linejoin="round"/></svg><svg class="ico" style="left:514.5px;top:34px" width="18" height="10" viewBox="0 0 18 10" ><path d="M2 1.500 L9 8.5 L16 1.500" fill="none" stroke="#a8a8a8" stroke-width="2.6" stroke-linecap="round" stroke-linejoin="round"/></svg><div class="btn" style="left:564px;top:18px;width:126px;height:40px"></div><div class="abs" style="left:627.500px;top:18px;width:62.500px;height:40px;border-radius:0 10px 10px 0;background:#2a6ecb"></div><svg class="ico" style="left:581px;top:25.5px" width="25" height="25" viewBox="0 0 25 25" ><rect x="0" y="0" width="7" height="7" rx="1.500" fill="#fff"/><rect x="9" y="0" width="7" height="7" rx="1.500" fill="#fff"/><rect x="18" y="0" width="7" height="7" rx="1.500" fill="#fff"/><rect x="0" y="9" width="7" height="7" rx="1.500" fill="#fff"/><rect x="9" y="9" width="7" height="7" rx="1.500" fill="#fff"/><rect x="18" y="9" width="7" height="7" rx="1.500" fill="#fff"/><rect x="0" y="18" width="7" height="7" rx="1.500" fill="#fff"/><rect x="9" y="18" width="7" height="7" rx="1.500" fill="#fff"/><rect x="18" y="18" width="7" height="7" rx="1.500" fill="#fff"/></svg><svg class="ico" style="left:642.5px;top:27px" width="30" height="22" viewBox="0 0 30 22" ><g fill="#fff"><rect x="0" y="0" width="12" height="5.500" rx="1"/><rect x="14.500" y="0" width="15.500" height="5.500" rx="1"/><rect x="0" y="8.200" width="19" height="5.500" rx="1"/><rect x="21.500" y="8.200" width="8.500" height="5.500" rx="1"/><rect x="0" y="16.500" width="30" height="5.500" rx="1"/></g></svg><div class="btn" style="left:708px;top:18px;width:126px;height:40px"></div><div class="abs" style="left:770px;top:18px;width:2px;height:40px;background:#4a4a4a"></div><svg class="ico" style="left:718px;top:26px" width="40" height="24" viewBox="0 0 40 24" style="overflow:visible"><path d="M1.500 20 L9 20 M16 16.500 L23 8.500 M30 5 L37.500 5" stroke="#fff" stroke-width="2.300" stroke-linecap="round"/><circle cx="13.300" cy="19.600" r="5.100" fill="#fff"/><circle cx="25.600" cy="5.200" r="5.100" fill="#fff"/></svg><svg class="ico" style="left:784px;top:27px" width="36" height="22" viewBox="0 0 36 22" ><path d="M2 1.500 L2 20.500 M34 1.500 L34 20.500 M2 20.500 C15 20.500 21 1.500 34 1.500 M2 1.500 C15 1.500 21 20.500 34 20.500" fill="none" stroke="#fff" stroke-width="2.300" stroke-linejoin="round" stroke-linecap="round"/></svg><div class="btn" style="left:852px;top:18px;width:66px;height:40px;background:#2a6ecb"></div><svg class="ico" style="left:870px;top:25px" width="30" height="28" viewBox="0 0 30 28" ><path d="M10 1 L20 1 L20 5 L16.500 9 L13.500 9 L10 5 Z" fill="#fff"/><path d="M15 6 L15 27" stroke="#fff" stroke-width="2.200"/><path d="M3.500 12.500 L9 18 L3.500 23.500 M26.500 12.500 L21 18 L26.500 23.500" fill="none" stroke="#fff" stroke-width="1.900" stroke-linecap="round" stroke-linejoin="round"/></svg><div class="btn" style="left:1961px;top:18px;width:171px;height:40px"></div><div class="abs" style="left:2046px;top:18px;width:2px;height:40px;background:#4a4a4a"></div><svg class="ico" style="left:1982px;top:24px" width="18" height="28" viewBox="0 0 18 28" ><path d="M2 1 L2 22 L7 17.500 L11 26.500 L14.500 25 L10.500 16 L17 16 Z" fill="#fff"/></svg><svg class="ico" style="left:2014px;top:34.5px" width="16" height="9" viewBox="0 0 16 9" ><path d="M2 1.500 L8 7.5 L14 1.500" fill="none" stroke="#a8a8a8" stroke-width="2.6" stroke-linecap="round" stroke-linejoin="round"/></svg><svg class="ico" style="left:2071px;top:24px" width="14" height="28" viewBox="0 0 14 28" ><path d="M2 1.500 Q7 1.500 7 5 Q7 1.500 12 1.500 M2 26.500 Q7 26.500 7 23 Q7 26.500 12 26.500 M7 4 L7 24 M4 18 L10 18" fill="none" stroke="#fff" stroke-width="1.800" stroke-linecap="round"/></svg><svg class="ico" style="left:2101px;top:34.5px" width="16" height="9" viewBox="0 0 16 9" ><path d="M2 1.500 L8 7.5 L14 1.500" fill="none" stroke="#a8a8a8" stroke-width="2.6" stroke-linecap="round" stroke-linejoin="round"/></svg><div class="lbl" style="left:2844px;top:21px">Snap:</div><div class="btn" style="left:2922px;top:16px;width:320px;height:40px"></div><div class="mtxt" style="left:2942px;top:20px">Smart</div><svg class="ico" style="left:3213px;top:23px" width="16" height="26" viewBox="0 0 16 26" ><path d="M2 9 L8 2.500 L14 9 M2 17 L8 23.500 L14 17" fill="none" stroke="#b0b0b0" stroke-width="2.400" stroke-linecap="round" stroke-linejoin="round"/></svg><div class="lbl" style="left:3262px;top:21px">Drag:</div><div class="btn" style="left:3337px;top:16px;width:201px;height:40px"></div><div class="mtxt" style="left:3356px;top:20px">X-Fade</div><svg class="ico" style="left:3509px;top:23px" width="16" height="26" viewBox="0 0 16 26" ><path d="M2 9 L8 2.500 L14 9 M2 17 L8 23.500 L14 17" fill="none" stroke="#b0b0b0" stroke-width="2.400" stroke-linecap="round" stroke-linejoin="round"/></svg><div class="btn" style="left:3556px;top:16px;width:62px;height:40px"></div><svg class="ico" style="left:3572px;top:21px" width="30" height="30" viewBox="0 0 30 30" ><path d="M2 12 L2 18" stroke="#fff" stroke-width="2" stroke-linecap="round"/><path d="M5.7 8 L5.7 22" stroke="#fff" stroke-width="2" stroke-linecap="round"/><path d="M9.4 3 L9.4 27" stroke="#fff" stroke-width="2" stroke-linecap="round"/><path d="M13.1 10 L13.1 20" stroke="#fff" stroke-width="2" stroke-linecap="round"/><path d="M16.8 1 L16.8 29" stroke="#fff" stroke-width="2" stroke-linecap="round"/><path d="M20.5 7 L20.5 23" stroke="#fff" stroke-width="2" stroke-linecap="round"/><path d="M24.2 11 L24.2 19" stroke="#fff" stroke-width="2" stroke-linecap="round"/><path d="M27.9 9 L27.9 21" stroke="#fff" stroke-width="2" stroke-linecap="round"/></svg><div class="btn" style="left:3636px;top:16px;width:126px;height:40px"></div><div class="abs" style="left:3698px;top:16px;width:2px;height:40px;background:#4a4a4a"></div><svg class="ico" style="left:3659px;top:22px" width="16" height="28" viewBox="0 0 16 28" ><path d="M2 1.500 L14 1.500 M2 26.500 L14 26.500 M8 5 L8 23 M4 9 L8 4.500 L12 9 M4 19 L8 23.500 L12 19" fill="none" stroke="#fff" stroke-width="2" stroke-linecap="round" stroke-linejoin="round"/></svg><svg class="ico" style="left:3716px;top:28px" width="28" height="16" viewBox="0 0 28 16" ><path d="M1.500 2 L1.500 14 M26.500 2 L26.500 14 M5 8 L23 8 M9 4 L4.500 8 L9 12 M19 4 L23.500 8 L19 12" fill="none" stroke="#fff" stroke-width="2" stroke-linecap="round" stroke-linejoin="round"/></svg><div class="abs" style="left:3778px;top:16px;width:300px;height:40px;border-radius:10px;background:#3d3d3d"></div><div class="abs" style="left:3926.500px;top:16px;width:2px;height:40px;background:#2e2e2e"></div><svg class="ico" style="left:3791.5px;top:24px" width="14" height="24" viewBox="0 0 14 24" ><path d="M7 2 L7 22 M2 7 L7 2 L12 7 M2 17 L7 22 L12 17" fill="none" stroke="#b5b5b5" stroke-width="2" stroke-linecap="round" stroke-linejoin="round"/></svg><div class="abs" style="left:3826px;top:33px;width:88px;height:6px;border-radius:3px;background:#353535"></div><div class="abs" style="left:3822px;top:24px;width:24px;height:24px;border-radius:50%;background:#9e9e9e"></div><svg class="ico" style="left:3937px;top:29px" width="24" height="14" viewBox="0 0 24 14" ><path d="M2 7 L22 7 M7 2 L2 7 L7 12 M17 2 L22 7 L17 12" fill="none" stroke="#b5b5b5" stroke-width="2" stroke-linecap="round" stroke-linejoin="round"/></svg><div class="abs" style="left:3974px;top:33px;width:90px;height:6px;border-radius:3px;background:#353535"></div><div class="abs" style="left:3970px;top:24px;width:24px;height:24px;border-radius:50%;background:#9e9e9e"></div><div class="abs" style="left:0;top:73.500px;width:4096px;height:1.500px;background:#363636"></div></div><div id="thead"><div class="btn" style="left:20px;top:16px;width:66px;height:40px"></div><svg class="ico" style="left:42px;top:25.5px" width="22" height="22" viewBox="0 0 22 22" ><path d="M11 1.500 L11 20.500 M1.500 11 L20.500 11" stroke="#fff" stroke-width="2.600" stroke-linecap="round"/></svg><div class="btn" style="left:106px;top:16px;width:66px;height:40px"></div><svg class="ico" style="left:123.5px;top:23.5px" width="32" height="26" viewBox="0 0 32 26" ><g fill="none" stroke="#fff" stroke-width="2.200" stroke-linejoin="round"><path d="M7 18.500 L4 18.500 Q1.500 18.500 1.500 16 L1.500 4 Q1.500 1.500 4 1.500 L21 1.500 Q23.500 1.500 23.500 4 L23.500 6"/><rect x="8" y="7.500" width="22.500" height="17" rx="2.500"/><path d="M19.200 11.500 L19.200 20.500 M14.500 16 L24 16" stroke-linecap="round"/></g></svg><div class="btn" style="left:192px;top:16px;width:66px;height:40px"></div><div class="abs" style="left:192px;top:18px;width:66px;text-align:center;font-size:31px;line-height:36px;color:#fff">S</div><div class="btn" style="left:608px;top:16px;width:66px;height:40px"></div><svg class="ico" style="left:626px;top:25.5px" width="30" height="22" viewBox="0 0 30 22" ><rect x="1.500" y="1.500" width="27" height="19" rx="2.500" fill="none" stroke="#fff" stroke-width="2.200"/><path d="M1.500 6 L28.500 6" stroke="#fff" stroke-width="2"/><path d="M15 8.500 L15 16.500 M11.500 13.500 L15 17 L18.500 13.500" fill="none" stroke="#fff" stroke-width="1.800" stroke-linecap="round" stroke-linejoin="round"/></svg></div><div id="tlist"><svg width="0" height="0" style="position:absolute"><defs><g id="i-midi"><rect x="0.500" y="0.500" width="23" height="17" rx="3" fill="#25492f" stroke="#1b3422" stroke-width="1"/><path d="M9 13.600 L9 5.300 L15.800 3.700 L15.800 12" fill="none" stroke="#5ad870" stroke-width="1.500"/><path d="M9 5.300 L15.800 3.700 L15.800 6 L9 7.600 Z" fill="#5ad870"/><ellipse cx="7.400" cy="13.800" rx="2.200" ry="1.800" fill="#5ad870"/><ellipse cx="14.200" cy="12.200" rx="2.200" ry="1.800" fill="#5ad870"/></g><g id="i-audio"><rect x="0.500" y="0.500" width="23" height="17" rx="3" fill="#1e3657" stroke="#17283f" stroke-width="1"/><path d="M3 1.200 L21 1.200" stroke="#35507a" stroke-width="0.800"/><g stroke="#4d9be2" stroke-width="1.200" stroke-linecap="round"><path d="M3 8.600 L3 9.400 M4.800 8 L4.800 10 M6.600 6.800 L6.600 11.200 M8.400 5.800 L8.400 12.200 M10.200 6.500 L10.200 11.500 M14 5.500 L14 12.500 M15.800 6.300 L15.800 11.700 M17.600 7.200 L17.600 10.800 M19.400 8 L19.400 10 M21 8.600 L21 9.400"/></g><path d="M12.100 3.500 L12.100 14.500" stroke="#b9d8f7" stroke-width="1.100" stroke-linecap="round"/></g><g id="i-knob"><rect x="0" y="0" width="24" height="18" rx="3" fill="#47442a" stroke="#33311c" stroke-width="1"/><circle cx="12" cy="9" r="6" fill="#f6ea45"/><path d="M12 5 L12 9" stroke="#3a3714" stroke-width="1.700" stroke-linecap="butt"/></g><g id="i-piano" fill="#2fc3cf"><path d="M2.200 18 L2.200 15.600 Q2.200 13.400 4.600 13.400 L7.800 13.400 L7.800 12.600 Q7.800 11.300 9.200 11.300 L12.600 11.300 Q14 11.300 14 12.600 L14 13.400 L19.600 13.400 Q22 13.400 22 15.600 L22 18 Z"/><path d="M3.300 11.800 L18.900 2.800" stroke="#2fc3cf" stroke-width="1.200" fill="none" stroke-linecap="round"/><rect x="2.800" y="18" width="1.100" height="7" opacity=".8"/><rect x="20.300" y="18" width="1.100" height="7" opacity=".8"/><rect x="11.300" y="18" width="1.700" height="5.500"/><rect x="10.300" y="23" width="3.700" height="1.300" rx=".6"/></g><g id="i-snow" fill="none" stroke="#fff" stroke-width="1.500" stroke-linecap="round"><path d="M10 0.800 L10 19.200 M2 5.400 L18 14.600 M2 14.600 L18 5.400"/><path d="M7.300 2.200 L10 4.800 L12.700 2.200 M7.300 17.800 L10 15.200 L12.700 17.800"/><path d="M1.400 8.800 L5 7.200 L4.200 3.300 M18.600 11.200 L15 12.800 L15.800 16.700"/><path d="M1.400 11.200 L5 12.800 L4.200 16.700 M18.600 8.800 L15 7.200 L15.800 3.300"/></g></defs></svg><div class="row" style="top:0px"><div class="num">1</div><svg class="ti" viewBox="0 0 24 18"><use href="#i-midi"/></svg><div class="b" style="left:196px;width:40px;border-radius:6px 0 0 6px">M</div><div class="b" style="left:238px;width:40px;border-radius:0 6px 6px 0">S</div><div class="b" style="left:332px;width:40px;border-radius:6px">R</div><div class="nm" style="letter-spacing:0.77px">Kick</div><div class="dot"></div></div><div class="row" style="top:30px"><div class="num">2</div><svg class="ti" viewBox="0 0 24 18"><use href="#i-midi"/></svg><div class="b" style="left:196px;width:40px;border-radius:6px 0 0 6px">M</div><div class="b" style="left:238px;width:40px;border-radius:0 6px 6px 0">S</div><div class="b" style="left:290px;width:40px;border-radius:6px 0 0 6px"><svg class="abs" style="left:10px;top:5px" width="20" height="20" viewBox="0 0 20 20"><use href="#i-snow"/></svg></div><div class="b" style="left:332px;width:40px;border-radius:0 6px 6px 0">R</div><div class="nm" style="letter-spacing:0.13px">Pad<span class="u">_</span>Mellow<span class="u">_</span>1</div><div class="dot"></div></div><div class="row" style="top:60px"><div class="num">3</div><svg class="ti" viewBox="0 0 24 18"><use href="#i-midi"/></svg><div class="b" style="left:196px;width:40px;border-radius:6px 0 0 6px">M</div><div class="b" style="left:238px;width:40px;border-radius:0 6px 6px 0">S</div><div class="b" style="left:290px;width:40px;border-radius:6px 0 0 6px"><svg class="abs" style="left:10px;top:5px" width="20" height="20" viewBox="0 0 20 20"><use href="#i-snow"/></svg></div><div class="b" style="left:332px;width:40px;border-radius:0 6px 6px 0">R</div><div class="nm" style="letter-spacing:0.84px">Pad<span class="u">_</span>Mellow2</div><div class="dot"></div></div><div class="row" style="top:90px"><div class="num">4</div><svg class="ti" viewBox="0 0 24 18"><use href="#i-midi"/></svg><div class="b" style="left:196px;width:40px;border-radius:6px 0 0 6px">M</div><div class="b" style="left:238px;width:40px;border-radius:0 6px 6px 0">S</div><div class="b" style="left:290px;width:40px;border-radius:6px 0 0 6px"><svg class="abs" style="left:10px;top:5px" width="20" height="20" viewBox="0 0 20 20"><use href="#i-snow"/></svg></div><div class="b" style="left:332px;width:40px;border-radius:0 6px 6px 0">R</div><div class="nm" style="letter-spacing:0.66px">Pad<span class="u">_</span>Mellow3</div><div class="dot"></div></div><div class="row" style="top:120px"><div class="num">5</div><svg class="ti" viewBox="0 0 24 18"><use href="#i-midi"/></svg><div class="b" style="left:196px;width:40px;border-radius:6px 0 0 6px">M</div><div class="b" style="left:238px;width:40px;border-radius:0 6px 6px 0">S</div><div class="b" style="left:290px;width:40px;border-radius:6px 0 0 6px"><svg class="abs" style="left:10px;top:5px" width="20" height="20" viewBox="0 0 20 20"><use href="#i-snow"/></svg></div><div class="b" style="left:332px;width:40px;border-radius:0 6px 6px 0">R</div><div class="nm" style="letter-spacing:0.64px">Organ</div><div class="dot"></div></div><div class="row" style="top:150px"><div class="num">6</div><svg class="abs" style="left:81px;top:0" width="24" height="28" viewBox="0 0 24 28"><use href="#i-piano"/></svg><div class="b" style="left:196px;width:40px;border-radius:6px 0 0 6px">M</div><div class="b" style="left:238px;width:40px;border-radius:0 6px 6px 0">S</div><div class="b" style="left:290px;width:40px;border-radius:6px 0 0 6px"><svg class="abs" style="left:10px;top:5px" width="20" height="20" viewBox="0 0 20 20"><use href="#i-snow"/></svg></div><div class="b" style="left:332px;width:40px;border-radius:0 6px 6px 0">R</div><div class="nm" style="letter-spacing:0.29px">Piano</div><div class="dot"></div></div><div class="row" style="top:180px"><div class="num">7</div><svg class="ti" viewBox="0 0 24 18"><use href="#i-audio"/></svg><div class="b" style="left:196px;width:40px;border-radius:6px 0 0 6px">M</div><div class="b" style="left:238px;width:40px;border-radius:0 6px 6px 0">S</div><div class="b" style="left:290px;width:40px;border-radius:6px 0 0 6px"><svg class="abs" style="left:10px;top:5px" width="20" height="20" viewBox="0 0 20 20"><use href="#i-snow"/></svg></div><div class="b" style="left:332px;width:40px;border-radius:0">R</div><div class="b" style="left:374px;width:40px;border-radius:0 6px 6px 0">I</div><div class="nm" style="letter-spacing:-0.01px">FX<span class="u">_</span>Swell<span class="u">_</span>1</div><div class="dot"></div></div><div class="row" style="top:210px"><div class="num">8</div><svg class="ti" viewBox="0 0 24 18"><use href="#i-audio"/></svg><div class="b" style="left:196px;width:40px;border-radius:6px 0 0 6px">M</div><div class="b" style="left:238px;width:40px;border-radius:0 6px 6px 0">S</div><div class="b" style="left:290px;width:40px;border-radius:6px 0 0 6px"><svg class="abs" style="left:10px;top:5px" width="20" height="20" viewBox="0 0 20 20"><use href="#i-snow"/></svg></div><div class="b" style="left:332px;width:40px;border-radius:0">R</div><div class="b" style="left:374px;width:40px;border-radius:0 6px 6px 0">I</div><div class="nm" style="letter-spacing:0.70px">FX<span class="u">_</span>Dist<span class="u">_</span>Swell</div><div class="dot"></div></div><div class="row" style="top:240px"><div class="num">9</div><svg class="ti" viewBox="0 0 24 18"><use href="#i-audio"/></svg><div class="b" style="left:196px;width:40px;border-radius:6px 0 0 6px">M</div><div class="b" style="left:238px;width:40px;border-radius:0 6px 6px 0">S</div><div class="b" style="left:290px;width:40px;border-radius:6px 0 0 6px"><svg class="abs" style="left:10px;top:5px" width="20" height="20" viewBox="0 0 20 20"><use href="#i-snow"/></svg></div><div class="b" style="left:332px;width:40px;border-radius:0">R</div><div class="b" style="left:374px;width:40px;border-radius:0 6px 6px 0">I</div><div class="nm" style="letter-spacing:0.63px">FX<span class="u">_</span>Sizzler</div><div class="dot"></div></div><div class="row" style="top:270px"><div class="num">10</div><svg class="ti" viewBox="0 0 24 18"><use href="#i-audio"/></svg><div class="b" style="left:196px;width:40px;border-radius:6px 0 0 6px">M</div><div class="b" style="left:238px;width:40px;border-radius:0 6px 6px 0">S</div><div class="b" style="left:290px;width:40px;border-radius:6px 0 0 6px"><svg class="abs" style="left:10px;top:5px" width="20" height="20" viewBox="0 0 20 20"><use href="#i-snow"/></svg></div><div class="b" style="left:332px;width:40px;border-radius:0">R</div><div class="b" style="left:374px;width:40px;border-radius:0 6px 6px 0">I</div><div class="nm" style="letter-spacing:0.75px">Bass drop</div><div class="dot"></div></div><div class="row" style="top:300px"><div class="num">11</div><svg class="ti" viewBox="0 0 24 18"><use href="#i-audio"/></svg><div class="b" style="left:196px;width:40px;border-radius:6px 0 0 6px">M</div><div class="b" style="left:238px;width:40px;border-radius:0 6px 6px 0">S</div><div class="b" style="left:290px;width:40px;border-radius:6px 0 0 6px"><svg class="abs" style="left:10px;top:5px" width="20" height="20" viewBox="0 0 20 20"><use href="#i-snow"/></svg></div><div class="b" style="left:332px;width:40px;border-radius:0">R</div><div class="b" style="left:374px;width:40px;border-radius:0 6px 6px 0">I</div><div class="nm" style="letter-spacing:0.71px">FX<span class="u">_</span>Static<span class="u">_</span>Snare</div><div class="dot"></div></div><div class="row" style="top:330px"><div class="num">12</div><svg class="ti" viewBox="0 0 24 18"><use href="#i-audio"/></svg><div class="b" style="left:196px;width:40px;border-radius:6px 0 0 6px">M</div><div class="b" style="left:238px;width:40px;border-radius:0 6px 6px 0">S</div><div class="b" style="left:290px;width:40px;border-radius:6px 0 0 6px"><svg class="abs" style="left:10px;top:5px" width="20" height="20" viewBox="0 0 20 20"><use href="#i-snow"/></svg></div><div class="b" style="left:332px;width:40px;border-radius:0">R</div><div class="b" style="left:374px;width:40px;border-radius:0 6px 6px 0">I</div><div class="nm" style="letter-spacing:0.32px">FX<span class="u">_</span>Snare</div><div class="dot"></div></div><div class="row" style="top:360px"><div class="num">13</div><svg class="ti" viewBox="0 0 24 18"><use href="#i-audio"/></svg><div class="b" style="left:196px;width:40px;border-radius:6px 0 0 6px">M</div><div class="b" style="left:238px;width:40px;border-radius:0 6px 6px 0">S</div><div class="b" style="left:290px;width:40px;border-radius:6px 0 0 6px"><svg class="abs" style="left:10px;top:5px" width="20" height="20" viewBox="0 0 20 20"><use href="#i-snow"/></svg></div><div class="b" style="left:332px;width:40px;border-radius:0">R</div><div class="b" style="left:374px;width:40px;border-radius:0 6px 6px 0">I</div><div class="nm" style="letter-spacing:0.45px">FX<span class="u">_</span>Kick</div><div class="dot"></div></div><div class="row" style="top:390px"><div class="num">14</div><svg class="ti" viewBox="0 0 24 18"><use href="#i-audio"/></svg><div class="b" style="left:196px;width:40px;border-radius:6px 0 0 6px">M</div><div class="b" style="left:238px;width:40px;border-radius:0 6px 6px 0">S</div><div class="b" style="left:290px;width:40px;border-radius:6px 0 0 6px"><svg class="abs" style="left:10px;top:5px" width="20" height="20" viewBox="0 0 20 20"><use href="#i-snow"/></svg></div><div class="b" style="left:332px;width:40px;border-radius:0">R</div><div class="b" style="left:374px;width:40px;border-radius:0 6px 6px 0">I</div><div class="nm" style="letter-spacing:0.39px">FX<span class="u">_</span>Noise<span class="u">_</span>1</div><div class="dot"></div></div><div class="row" style="top:420px"><div class="num">15</div><svg class="ti" viewBox="0 0 24 18"><use href="#i-audio"/></svg><div class="b" style="left:196px;width:40px;border-radius:6px 0 0 6px">M</div><div class="b" style="left:238px;width:40px;border-radius:0 6px 6px 0">S</div><div class="b" style="left:290px;width:40px;border-radius:6px 0 0 6px"><svg class="abs" style="left:10px;top:5px" width="20" height="20" viewBox="0 0 20 20"><use href="#i-snow"/></svg></div><div class="b" style="left:332px;width:40px;border-radius:0">R</div><div class="b" style="left:374px;width:40px;border-radius:0 6px 6px 0">I</div><div class="nm" style="letter-spacing:0.39px">FX<span class="u">_</span>Noise<span class="u">_</span>2</div><div class="dot"></div></div><div class="row" style="top:450px"><div class="num">16</div><svg class="ti" viewBox="0 0 24 18"><use href="#i-audio"/></svg><div class="b" style="left:196px;width:40px;border-radius:6px 0 0 6px">M</div><div class="b" style="left:238px;width:40px;border-radius:0 6px 6px 0">S</div><div class="b" style="left:290px;width:40px;border-radius:6px 0 0 6px"><svg class="abs" style="left:10px;top:5px" width="20" height="20" viewBox="0 0 20 20"><use href="#i-snow"/></svg></div><div class="b" style="left:332px;width:40px;border-radius:0">R</div><div class="b" style="left:374px;width:40px;border-radius:0 6px 6px 0">I</div><div class="nm" style="letter-spacing:0.66px">FX<span class="u">_</span>GTR<span class="u">_</span>Stutter</div><div class="dot"></div></div><div class="row" style="top:480px"><div class="num">17</div><svg class="ti" viewBox="0 0 24 18"><use href="#i-audio"/></svg><div class="b" style="left:196px;width:40px;border-radius:6px 0 0 6px">M</div><div class="b" style="left:238px;width:40px;border-radius:0 6px 6px 0">S</div><div class="b" style="left:290px;width:40px;border-radius:6px 0 0 6px"><svg class="abs" style="left:10px;top:5px" width="20" height="20" viewBox="0 0 20 20"><use href="#i-snow"/></svg></div><div class="b" style="left:332px;width:40px;border-radius:0">R</div><div class="b" style="left:374px;width:40px;border-radius:0 6px 6px 0">I</div><div class="nm" style="letter-spacing:-0.13px">Bass<span class="u">_</span>H...DIST<span class="u">_</span>1</div><div class="dot"></div></div><div class="row" style="top:510px"><div class="num">18</div><svg class="ti" viewBox="0 0 24 18"><use href="#i-audio"/></svg><div class="b" style="left:196px;width:40px;border-radius:6px 0 0 6px">M</div><div class="b" style="left:238px;width:40px;border-radius:0 6px 6px 0">S</div><div class="b" style="left:290px;width:40px;border-radius:6px 0 0 6px"><svg class="abs" style="left:10px;top:5px" width="20" height="20" viewBox="0 0 20 20"><use href="#i-snow"/></svg></div><div class="b" style="left:332px;width:40px;border-radius:0">R</div><div class="b" style="left:374px;width:40px;border-radius:0 6px 6px 0">I</div><div class="nm" style="letter-spacing:0.15px">Bass<span class="u">_</span>H...DIST<span class="u">_</span>2</div><div class="dot"></div></div><div class="row" style="top:540px"><div class="num">19</div><svg class="ti" viewBox="0 0 24 18"><use href="#i-audio"/></svg><div class="b" style="left:196px;width:40px;border-radius:6px 0 0 6px">M</div><div class="b" style="left:238px;width:40px;border-radius:0 6px 6px 0">S</div><div class="b" style="left:290px;width:40px;border-radius:6px 0 0 6px"><svg class="abs" style="left:10px;top:5px" width="20" height="20" viewBox="0 0 20 20"><use href="#i-snow"/></svg></div><div class="b" style="left:332px;width:40px;border-radius:0">R</div><div class="b" style="left:374px;width:40px;border-radius:0 6px 6px 0">I</div><div class="nm" style="letter-spacing:0.50px">Bass<span class="u">_</span>H...Crunch</div><div class="dot"></div></div><div class="row" style="top:570px"><div class="num">20</div><svg class="ti" viewBox="0 0 24 18"><use href="#i-audio"/></svg><div class="b" style="left:196px;width:40px;border-radius:6px 0 0 6px">M</div><div class="b" style="left:238px;width:40px;border-radius:0 6px 6px 0">S</div><div class="b" style="left:290px;width:40px;border-radius:6px 0 0 6px"><svg class="abs" style="left:10px;top:5px" width="20" height="20" viewBox="0 0 20 20"><use href="#i-snow"/></svg></div><div class="b" style="left:332px;width:40px;border-radius:0">R</div><div class="b" style="left:374px;width:40px;border-radius:0 6px 6px 0">I</div><div class="nm" style="letter-spacing:0.63px">Bass<span class="u">_</span>High<span class="u">_</span>Clean</div><div class="dot"></div></div><div class="row" style="top:600px"><div class="num">21</div><svg class="ti" viewBox="0 0 24 18"><use href="#i-audio"/></svg><div class="b" style="left:196px;width:40px;border-radius:6px 0 0 6px">M</div><div class="b" style="left:238px;width:40px;border-radius:0 6px 6px 0">S</div><div class="b" style="left:290px;width:40px;border-radius:6px 0 0 6px"><svg class="abs" style="left:10px;top:5px" width="20" height="20" viewBox="0 0 20 20"><use href="#i-snow"/></svg></div><div class="b" style="left:332px;width:40px;border-radius:0">R</div><div class="b" style="left:374px;width:40px;border-radius:0 6px 6px 0">I</div><div class="nm" style="letter-spacing:0.64px">Bass<span class="u">_</span>Low</div><div class="dot"></div></div><div class="row" style="top:630px"><div class="num">22</div><svg class="ti" viewBox="0 0 24 18"><use href="#i-audio"/></svg><div class="b" style="left:196px;width:40px;border-radius:6px 0 0 6px">M</div><div class="b" style="left:238px;width:40px;border-radius:0 6px 6px 0">S</div><div class="b" style="left:290px;width:40px;border-radius:6px 0 0 6px"><svg class="abs" style="left:10px;top:5px" width="20" height="20" viewBox="0 0 20 20"><use href="#i-snow"/></svg></div><div class="b" style="left:332px;width:40px;border-radius:0">R</div><div class="b" style="left:374px;width:40px;border-radius:0 6px 6px 0">I</div><div class="nm" style="letter-spacing:0.53px">GTR<span class="u">_</span>Filter</div><div class="dot"></div></div><div class="row" style="top:660px"><div class="num">23</div><svg class="ti" viewBox="0 0 24 18"><use href="#i-audio"/></svg><div class="b" style="left:196px;width:40px;border-radius:6px 0 0 6px">M</div><div class="b" style="left:238px;width:40px;border-radius:0 6px 6px 0">S</div><div class="b" style="left:290px;width:40px;border-radius:6px 0 0 6px"><svg class="abs" style="left:10px;top:5px" width="20" height="20" viewBox="0 0 20 20"><use href="#i-snow"/></svg></div><div class="b" style="left:332px;width:40px;border-radius:0">R</div><div class="b" style="left:374px;width:40px;border-radius:0 6px 6px 0">I</div><div class="nm" style="letter-spacing:0.51px">GTR<span class="u">_</span>Filter<span class="u">_</span>Low</div><div class="dot"></div></div><div class="row" style="top:690px"><div class="num">24</div><svg class="ti" viewBox="0 0 24 18"><use href="#i-audio"/></svg><div class="b" style="left:196px;width:40px;border-radius:6px 0 0 6px">M</div><div class="b" style="left:238px;width:40px;border-radius:0 6px 6px 0">S</div><div class="b" style="left:290px;width:40px;border-radius:6px 0 0 6px"><svg class="abs" style="left:10px;top:5px" width="20" height="20" viewBox="0 0 20 20"><use href="#i-snow"/></svg></div><div class="b" style="left:332px;width:40px;border-radius:0">R</div><div class="b" style="left:374px;width:40px;border-radius:0 6px 6px 0">I</div><div class="nm" style="letter-spacing:0.27px">GTR1<span class="u">_</span>...thicc<span class="u">_</span>1</div><div class="dot"></div></div><div class="row" style="top:720px"><div class="num">25</div><svg class="ti" viewBox="0 0 24 18"><use href="#i-audio"/></svg><div class="b" style="left:196px;width:40px;border-radius:6px 0 0 6px">M</div><div class="b" style="left:238px;width:40px;border-radius:0 6px 6px 0">S</div><div class="b" style="left:290px;width:40px;border-radius:6px 0 0 6px"><svg class="abs" style="left:10px;top:5px" width="20" height="20" viewBox="0 0 20 20"><use href="#i-snow"/></svg></div><div class="b" style="left:332px;width:40px;border-radius:0">R</div><div class="b" style="left:374px;width:40px;border-radius:0 6px 6px 0">I</div><div class="nm" style="letter-spacing:0.21px">GTR2<span class="u">_</span>...hicc<span class="u">_</span>2</div><div class="dot"></div></div><div class="row" style="top:750px"><div class="num">26</div><svg class="ti" viewBox="0 0 24 18"><use href="#i-audio"/></svg><div class="b" style="left:196px;width:40px;border-radius:6px 0 0 6px">M</div><div class="b" style="left:238px;width:40px;border-radius:0 6px 6px 0">S</div><div class="b" style="left:290px;width:40px;border-radius:6px 0 0 6px"><svg class="abs" style="left:10px;top:5px" width="20" height="20" viewBox="0 0 20 20"><use href="#i-snow"/></svg></div><div class="b" style="left:332px;width:40px;border-radius:0">R</div><div class="b" style="left:374px;width:40px;border-radius:0 6px 6px 0">I</div><div class="nm" style="letter-spacing:0.12px">GTR1<span class="u">_</span>...<span class="u">_</span>Dist<span class="u">_</span>1</div><div class="dot"></div></div><div class="row" style="top:780px"><div class="num">27</div><svg class="ti" viewBox="0 0 24 18"><use href="#i-audio"/></svg><div class="b" style="left:196px;width:40px;border-radius:6px 0 0 6px">M</div><div class="b" style="left:238px;width:40px;border-radius:0 6px 6px 0">S</div><div class="b" style="left:290px;width:40px;border-radius:6px 0 0 6px"><svg class="abs" style="left:10px;top:5px" width="20" height="20" viewBox="0 0 20 20"><use href="#i-snow"/></svg></div><div class="b" style="left:332px;width:40px;border-radius:0">R</div><div class="b" style="left:374px;width:40px;border-radius:0 6px 6px 0">I</div><div class="nm" style="letter-spacing:0.12px">GTR1<span class="u">_</span>...<span class="u">_</span>Dist<span class="u">_</span>2</div><div class="dot"></div></div><div class="row" style="top:810px"><div class="num">28</div><svg class="ti" viewBox="0 0 24 18"><use href="#i-audio"/></svg><div class="b" style="left:196px;width:40px;border-radius:6px 0 0 6px">M</div><div class="b" style="left:238px;width:40px;border-radius:0 6px 6px 0">S</div><div class="b" style="left:290px;width:40px;border-radius:6px 0 0 6px"><svg class="abs" style="left:10px;top:5px" width="20" height="20" viewBox="0 0 20 20"><use href="#i-snow"/></svg></div><div class="b" style="left:332px;width:40px;border-radius:0">R</div><div class="b" style="left:374px;width:40px;border-radius:0 6px 6px 0">I</div><div class="nm" style="letter-spacing:0.48px">GTR<span class="u">_</span>Oct<span class="u">_</span>Pedal</div><div class="dot"></div></div><div class="row" style="top:840px"><div class="num">29</div><svg class="ti" viewBox="0 0 24 18"><use href="#i-audio"/></svg><div class="b" style="left:196px;width:40px;border-radius:6px 0 0 6px">M</div><div class="b" style="left:238px;width:40px;border-radius:0 6px 6px 0">S</div><div class="b" style="left:290px;width:40px;border-radius:6px 0 0 6px"><svg class="abs" style="left:10px;top:5px" width="20" height="20" viewBox="0 0 20 20"><use href="#i-snow"/></svg></div><div class="b" style="left:332px;width:40px;border-radius:0">R</div><div class="b" style="left:374px;width:40px;border-radius:0 6px 6px 0">I</div><div class="nm" style="letter-spacing:0.48px">GTR<span class="u">_</span>Oct<span class="u">_</span>Pedal</div><div class="dot"></div></div><div class="row" style="top:870px"><div class="num">30</div><svg class="ti" viewBox="0 0 24 18"><use href="#i-audio"/></svg><div class="b" style="left:196px;width:40px;border-radius:6px 0 0 6px">M</div><div class="b" style="left:238px;width:40px;border-radius:0 6px 6px 0">S</div><div class="b" style="left:290px;width:40px;border-radius:6px 0 0 6px"><svg class="abs" style="left:10px;top:5px" width="20" height="20" viewBox="0 0 20 20"><use href="#i-snow"/></svg></div><div class="b" style="left:332px;width:40px;border-radius:0">R</div><div class="b" style="left:374px;width:40px;border-radius:0 6px 6px 0">I</div><div class="nm" style="letter-spacing:0.33px">GTR<span class="u">_</span>Cr...ey<span class="u">_</span>lead</div><div class="dot"></div></div><div class="row" style="top:900px"><div class="num">31</div><svg class="ti" viewBox="0 0 24 18"><use href="#i-audio"/></svg><div class="b" style="left:196px;width:40px;border-radius:6px 0 0 6px">M</div><div class="b" style="left:238px;width:40px;border-radius:0 6px 6px 0">S</div><div class="b" style="left:290px;width:40px;border-radius:6px 0 0 6px"><svg class="abs" style="left:10px;top:5px" width="20" height="20" viewBox="0 0 20 20"><use href="#i-snow"/></svg></div><div class="b" style="left:332px;width:40px;border-radius:0">R</div><div class="b" style="left:374px;width:40px;border-radius:0 6px 6px 0">I</div><div class="nm" style="letter-spacing:0.33px">GTR<span class="u">_</span>L...Spacey</div><div class="dot"></div></div><div class="row" style="top:930px"><div class="num">32</div><svg class="ti" viewBox="0 0 24 18"><use href="#i-audio"/></svg><div class="b" style="left:196px;width:40px;border-radius:6px 0 0 6px">M</div><div class="b" style="left:238px;width:40px;border-radius:0 6px 6px 0">S</div><div class="b" style="left:290px;width:40px;border-radius:6px 0 0 6px"><svg class="abs" style="left:10px;top:5px" width="20" height="20" viewBox="0 0 20 20"><use href="#i-snow"/></svg></div><div class="b" style="left:332px;width:40px;border-radius:0">R</div><div class="b" style="left:374px;width:40px;border-radius:0 6px 6px 0">I</div><div class="nm" style="letter-spacing:0.30px">GTR<span class="u">_</span>Lead<span class="u">_</span>1</div><div class="dot"></div></div><div class="row" style="top:960px"><div class="num">33</div><svg class="ti" viewBox="0 0 24 18"><use href="#i-audio"/></svg><div class="b" style="left:196px;width:40px;border-radius:6px 0 0 6px">M</div><div class="b" style="left:238px;width:40px;border-radius:0 6px 6px 0">S</div><div class="b" style="left:290px;width:40px;border-radius:6px 0 0 6px"><svg class="abs" style="left:10px;top:5px" width="20" height="20" viewBox="0 0 20 20"><use href="#i-snow"/></svg></div><div class="b" style="left:332px;width:40px;border-radius:0">R</div><div class="b" style="left:374px;width:40px;border-radius:0 6px 6px 0">I</div><div class="nm" style="letter-spacing:0.30px">GTR<span class="u">_</span>Lead<span class="u">_</span>2</div><div class="dot"></div></div><div class="row" style="top:990px"><div class="num">34</div><svg class="ti" viewBox="0 0 24 18"><use href="#i-audio"/></svg><div class="b" style="left:196px;width:40px;border-radius:6px 0 0 6px">M</div><div class="b" style="left:238px;width:40px;border-radius:0 6px 6px 0">S</div><div class="b" style="left:290px;width:40px;border-radius:6px 0 0 6px"><svg class="abs" style="left:10px;top:5px" width="20" height="20" viewBox="0 0 20 20"><use href="#i-snow"/></svg></div><div class="b" style="left:332px;width:40px;border-radius:0">R</div><div class="b" style="left:374px;width:40px;border-radius:0 6px 6px 0">I</div><div class="nm" style="letter-spacing:0.30px">GTR<span class="u">_</span>Lead<span class="u">_</span>3</div><div class="dot"></div></div><div class="row" style="top:1020px"><div class="num">35</div><svg class="ti" viewBox="0 0 24 18"><use href="#i-audio"/></svg><div class="b" style="left:196px;width:40px;border-radius:6px 0 0 6px">M</div><div class="b" style="left:238px;width:40px;border-radius:0 6px 6px 0">S</div><div class="b" style="left:290px;width:40px;border-radius:6px 0 0 6px"><svg class="abs" style="left:10px;top:5px" width="20" height="20" viewBox="0 0 20 20"><use href="#i-snow"/></svg></div><div class="b" style="left:332px;width:40px;border-radius:0">R</div><div class="b" style="left:374px;width:40px;border-radius:0 6px 6px 0">I</div><div class="nm" style="letter-spacing:0.30px">GTR<span class="u">_</span>Lead<span class="u">_</span>4</div><div class="dot"></div></div><div class="row" style="top:1050px"><div class="num">36</div><svg class="ti" viewBox="0 0 24 18"><use href="#i-audio"/></svg><div class="b" style="left:196px;width:40px;border-radius:6px 0 0 6px">M</div><div class="b" style="left:238px;width:40px;border-radius:0 6px 6px 0">S</div><div class="b" style="left:290px;width:40px;border-radius:6px 0 0 6px"><svg class="abs" style="left:10px;top:5px" width="20" height="20" viewBox="0 0 20 20"><use href="#i-snow"/></svg></div><div class="b" style="left:332px;width:40px;border-radius:0">R</div><div class="b" style="left:374px;width:40px;border-radius:0 6px 6px 0">I</div><div class="nm" style="letter-spacing:0.15px">GTR<span class="u">_</span>L...4<span class="u">_</span>Dble</div><div class="dot"></div></div><div class="row" style="top:1080px"><div class="num">37</div><svg class="ti" viewBox="0 0 24 18"><use href="#i-audio"/></svg><div class="b" style="left:196px;width:40px;border-radius:6px 0 0 6px">M</div><div class="b" style="left:238px;width:40px;border-radius:0 6px 6px 0">S</div><div class="b" style="left:290px;width:40px;border-radius:6px 0 0 6px"><svg class="abs" style="left:10px;top:5px" width="20" height="20" viewBox="0 0 20 20"><use href="#i-snow"/></svg></div><div class="b" style="left:332px;width:40px;border-radius:0">R</div><div class="b" style="left:374px;width:40px;border-radius:0 6px 6px 0">I</div><div class="nm" style="letter-spacing:0.12px">GTR<span class="u">_</span>Cl...<span class="u">_</span>Wet<span class="u">_</span>1</div><div class="dot"></div></div><div class="row" style="top:1110px"><div class="num">38</div><svg class="ti" viewBox="0 0 24 18"><use href="#i-audio"/></svg><div class="b" style="left:196px;width:40px;border-radius:6px 0 0 6px">M</div><div class="b" style="left:238px;width:40px;border-radius:0 6px 6px 0">S</div><div class="b" style="left:290px;width:40px;border-radius:6px 0 0 6px"><svg class="abs" style="left:10px;top:5px" width="20" height="20" viewBox="0 0 20 20"><use href="#i-snow"/></svg></div><div class="b" style="left:332px;width:40px;border-radius:0">R</div><div class="b" style="left:374px;width:40px;border-radius:0 6px 6px 0">I</div><div class="nm" style="letter-spacing:0.12px">GTR<span class="u">_</span>Cl...<span class="u">_</span>Wet<span class="u">_</span>2</div><div class="dot"></div></div><div class="row" style="top:1140px"><div class="num">39</div><svg class="ti" viewBox="0 0 24 18"><use href="#i-audio"/></svg><div class="b" style="left:196px;width:40px;border-radius:6px 0 0 6px">M</div><div class="b" style="left:238px;width:40px;border-radius:0 6px 6px 0">S</div><div class="b" style="left:290px;width:40px;border-radius:6px 0 0 6px"><svg class="abs" style="left:10px;top:5px" width="20" height="20" viewBox="0 0 20 20"><use href="#i-snow"/></svg></div><div class="b" style="left:332px;width:40px;border-radius:0">R</div><div class="b" style="left:374px;width:40px;border-radius:0 6px 6px 0">I</div><div class="nm" style="letter-spacing:0.48px">GTR<span class="u">_</span>Clean<span class="u">_</span>Oct</div><div class="dot"></div></div><div class="row" style="top:1170px"><div class="num">40</div><svg class="ti" viewBox="0 0 24 18"><use href="#i-audio"/></svg><div class="b" style="left:196px;width:40px;border-radius:6px 0 0 6px">M</div><div class="b" style="left:238px;width:40px;border-radius:0 6px 6px 0">S</div><div class="b" style="left:290px;width:40px;border-radius:6px 0 0 6px"><svg class="abs" style="left:10px;top:5px" width="20" height="20" viewBox="0 0 20 20"><use href="#i-snow"/></svg></div><div class="b" style="left:332px;width:40px;border-radius:0">R</div><div class="b" style="left:374px;width:40px;border-radius:0 6px 6px 0">I</div><div class="nm" style="letter-spacing:0.48px">GTR<span class="u">_</span>Clean<span class="u">_</span>Mod</div><div class="dot"></div></div><div class="row" style="top:1200px"><div class="num">41</div><svg class="ti" viewBox="0 0 24 18"><use href="#i-audio"/></svg><div class="b" style="left:196px;width:40px;border-radius:6px 0 0 6px">M</div><div class="b" style="left:238px;width:40px;border-radius:0 6px 6px 0">S</div><div class="b" style="left:290px;width:40px;border-radius:6px 0 0 6px"><svg class="abs" style="left:10px;top:5px" width="20" height="20" viewBox="0 0 20 20"><use href="#i-snow"/></svg></div><div class="b" style="left:332px;width:40px;border-radius:0">R</div><div class="b" style="left:374px;width:40px;border-radius:0 6px 6px 0">I</div><div class="nm" style="letter-spacing:0.58px">GTR<span class="u">_</span>Crunch<span class="u">_</span>wet</div><div class="dot"></div></div><div class="row" style="top:1230px"><div class="num">42</div><svg class="ti" viewBox="0 0 24 18"><use href="#i-audio"/></svg><div class="b" style="left:196px;width:40px;border-radius:6px 0 0 6px">M</div><div class="b" style="left:238px;width:40px;border-radius:0 6px 6px 0">S</div><div class="b" style="left:290px;width:40px;border-radius:6px 0 0 6px"><svg class="abs" style="left:10px;top:5px" width="20" height="20" viewBox="0 0 20 20"><use href="#i-snow"/></svg></div><div class="b" style="left:332px;width:40px;border-radius:0">R</div><div class="b" style="left:374px;width:40px;border-radius:0 6px 6px 0">I</div><div class="nm" style="letter-spacing:0.59px">GTR<span class="u">_</span>Crunch<span class="u">_</span>dry</div><div class="dot"></div></div><div class="row" style="top:1260px"><div class="num">43</div><svg class="ti" viewBox="0 0 24 18"><use href="#i-audio"/></svg><div class="b" style="left:196px;width:40px;border-radius:6px 0 0 6px">M</div><div class="b" style="left:238px;width:40px;border-radius:0 6px 6px 0">S</div><div class="b" style="left:290px;width:40px;border-radius:6px 0 0 6px"><svg class="abs" style="left:10px;top:5px" width="20" height="20" viewBox="0 0 20 20"><use href="#i-snow"/></svg></div><div class="b" style="left:332px;width:40px;border-radius:0">R</div><div class="b" style="left:374px;width:40px;border-radius:0 6px 6px 0">I</div><div class="nm" style="letter-spacing:0.54px">Scream</div><div class="dot"></div></div><div class="row" style="top:1290px"><div class="num">44</div><svg class="ti" viewBox="0 0 24 18"><use href="#i-audio"/></svg><div class="b" style="left:196px;width:40px;border-radius:6px 0 0 6px">M</div><div class="b" style="left:238px;width:40px;border-radius:0 6px 6px 0">S</div><div class="b" style="left:290px;width:40px;border-radius:6px 0 0 6px"><svg class="abs" style="left:10px;top:5px" width="20" height="20" viewBox="0 0 20 20"><use href="#i-snow"/></svg></div><div class="b" style="left:332px;width:40px;border-radius:0">R</div><div class="b" style="left:374px;width:40px;border-radius:0 6px 6px 0">I</div><div class="nm" style="letter-spacing:0.54px">Scream</div><div class="dot"></div></div><div class="row" style="top:1320px"><div class="num">45</div><svg class="ti" viewBox="0 0 24 18"><use href="#i-audio"/></svg><div class="b" style="left:196px;width:40px;border-radius:6px 0 0 6px">M</div><div class="b" style="left:238px;width:40px;border-radius:0 6px 6px 0">S</div><div class="b" style="left:290px;width:40px;border-radius:6px 0 0 6px"><svg class="abs" style="left:10px;top:5px" width="20" height="20" viewBox="0 0 20 20"><use href="#i-snow"/></svg></div><div class="b" style="left:332px;width:40px;border-radius:0">R</div><div class="b" style="left:374px;width:40px;border-radius:0 6px 6px 0">I</div><div class="nm" style="letter-spacing:0.67px">Scream...ack<span class="u">_</span>Up</div><div class="dot"></div></div><div class="row" style="top:1350px"><div class="num">46</div><svg class="ti" viewBox="0 0 24 18"><use href="#i-audio"/></svg><div class="b" style="left:196px;width:40px;border-radius:6px 0 0 6px">M</div><div class="b" style="left:238px;width:40px;border-radius:0 6px 6px 0">S</div><div class="b" style="left:290px;width:40px;border-radius:6px 0 0 6px"><svg class="abs" style="left:10px;top:5px" width="20" height="20" viewBox="0 0 20 20"><use href="#i-snow"/></svg></div><div class="b" style="left:332px;width:40px;border-radius:0">R</div><div class="b" style="left:374px;width:40px;border-radius:0 6px 6px 0">I</div><div class="nm" style="letter-spacing:0.67px">Scream...ack<span class="u">_</span>Up</div><div class="dot"></div></div><div class="row" style="top:1380px"><div class="num">47</div><svg class="ti" viewBox="0 0 24 18"><use href="#i-audio"/></svg><div class="b" style="left:196px;width:40px;border-radius:6px 0 0 6px">M</div><div class="b" style="left:238px;width:40px;border-radius:0 6px 6px 0">S</div><div class="b" style="left:290px;width:40px;border-radius:6px 0 0 6px"><svg class="abs" style="left:10px;top:5px" width="20" height="20" viewBox="0 0 20 20"><use href="#i-snow"/></svg></div><div class="b" style="left:332px;width:40px;border-radius:0">R</div><div class="b" style="left:374px;width:40px;border-radius:0 6px 6px 0">I</div><div class="nm" style="letter-spacing:0.41px">Scream...<span class="u">_</span>Up<span class="u">_</span>Fx</div><div class="dot"></div></div><div class="row" style="top:1410px"><div class="num">48</div><svg class="ti" viewBox="0 0 24 18"><use href="#i-audio"/></svg><div class="b" style="left:196px;width:40px;border-radius:6px 0 0 6px">M</div><div class="b" style="left:238px;width:40px;border-radius:0 6px 6px 0">S</div><div class="b" style="left:290px;width:40px;border-radius:6px 0 0 6px"><svg class="abs" style="left:10px;top:5px" width="20" height="20" viewBox="0 0 20 20"><use href="#i-snow"/></svg></div><div class="b" style="left:332px;width:40px;border-radius:0">R</div><div class="b" style="left:374px;width:40px;border-radius:0 6px 6px 0">I</div><div class="nm" style="letter-spacing:0.41px">Scream...<span class="u">_</span>Up<span class="u">_</span>Fx</div><div class="dot"></div></div><div class="row" style="top:1440px"><div class="num">49</div><svg class="ti" viewBox="0 0 24 18"><use href="#i-audio"/></svg><div class="b" style="left:196px;width:40px;border-radius:6px 0 0 6px">M</div><div class="b" style="left:238px;width:40px;border-radius:0 6px 6px 0">S</div><div class="b" style="left:290px;width:40px;border-radius:6px 0 0 6px"><svg class="abs" style="left:10px;top:5px" width="20" height="20" viewBox="0 0 20 20"><use href="#i-snow"/></svg></div><div class="b" style="left:332px;width:40px;border-radius:0">R</div><div class="b" style="left:374px;width:40px;border-radius:0 6px 6px 0">I</div><div class="nm" style="letter-spacing:0.71px">Vocals<span class="u">_</span>Verse<span class="u">_</span>2</div><div class="dot"></div></div><div class="row" style="top:1470px"><div class="num">50</div><svg class="ti" viewBox="0 0 24 18"><use href="#i-audio"/></svg><div class="b" style="left:196px;width:40px;border-radius:6px 0 0 6px">M</div><div class="b" style="left:238px;width:40px;border-radius:0 6px 6px 0">S</div><div class="b" style="left:290px;width:40px;border-radius:6px 0 0 6px"><svg class="abs" style="left:10px;top:5px" width="20" height="20" viewBox="0 0 20 20"><use href="#i-snow"/></svg></div><div class="b" style="left:332px;width:40px;border-radius:0">R</div><div class="b" style="left:374px;width:40px;border-radius:0 6px 6px 0">I</div><div class="nm" style="letter-spacing:0.71px">Vocals<span class="u">_</span>Verse<span class="u">_</span>2</div><div class="dot"></div></div><div class="row" style="top:1500px"><div class="num">51</div><svg class="ti" viewBox="0 0 24 18"><use href="#i-audio"/></svg><div class="b" style="left:196px;width:40px;border-radius:6px 0 0 6px">M</div><div class="b" style="left:238px;width:40px;border-radius:0 6px 6px 0">S</div><div class="b" style="left:290px;width:40px;border-radius:6px 0 0 6px"><svg class="abs" style="left:10px;top:5px" width="20" height="20" viewBox="0 0 20 20"><use href="#i-snow"/></svg></div><div class="b" style="left:332px;width:40px;border-radius:0">R</div><div class="b" style="left:374px;width:40px;border-radius:0 6px 6px 0">I</div><div class="nm" style="letter-spacing:0.75px">Vocals<span class="u">_</span>Soft</div><div class="dot"></div></div><div class="row" style="top:1530px"><div class="num">52</div><svg class="ti" viewBox="0 0 24 18"><use href="#i-audio"/></svg><div class="b" style="left:196px;width:40px;border-radius:6px 0 0 6px">M</div><div class="b" style="left:238px;width:40px;border-radius:0 6px 6px 0">S</div><div class="b" style="left:290px;width:40px;border-radius:6px 0 0 6px"><svg class="abs" style="left:10px;top:5px" width="20" height="20" viewBox="0 0 20 20"><use href="#i-snow"/></svg></div><div class="b" style="left:332px;width:40px;border-radius:0">R</div><div class="b" style="left:374px;width:40px;border-radius:0 6px 6px 0">I</div><div class="nm" style="letter-spacing:0.44px">Vocals<span class="u">_</span>...Soft<span class="u">_</span>2</div><div class="dot"></div></div><div class="row" style="top:1560px"><div class="num">53</div><svg class="ti" viewBox="0 0 24 18"><use href="#i-audio"/></svg><div class="b" style="left:196px;width:40px;border-radius:6px 0 0 6px">M</div><div class="b" style="left:238px;width:40px;border-radius:0 6px 6px 0">S</div><div class="b" style="left:290px;width:40px;border-radius:6px 0 0 6px"><svg class="abs" style="left:10px;top:5px" width="20" height="20" viewBox="0 0 20 20"><use href="#i-snow"/></svg></div><div class="b" style="left:332px;width:40px;border-radius:0">R</div><div class="b" style="left:374px;width:40px;border-radius:0 6px 6px 0">I</div><div class="nm" style="letter-spacing:0.78px">Vocals<span class="u">_</span>Verse</div><div class="dot"></div></div><div class="row" style="top:1590px"><div class="num">54</div><svg class="ti" viewBox="0 0 24 18"><use href="#i-audio"/></svg><div class="b" style="left:196px;width:40px;border-radius:6px 0 0 6px">M</div><div class="b" style="left:238px;width:40px;border-radius:0 6px 6px 0">S</div><div class="b" style="left:290px;width:40px;border-radius:6px 0 0 6px"><svg class="abs" style="left:10px;top:5px" width="20" height="20" viewBox="0 0 20 20"><use href="#i-snow"/></svg></div><div class="b" style="left:332px;width:40px;border-radius:0">R</div><div class="b" style="left:374px;width:40px;border-radius:0 6px 6px 0">I</div><div class="nm" style="letter-spacing:0.57px">Vocals<span class="u">_</span>...e<span class="u">_</span>wide</div><div class="dot"></div></div><div class="row" style="top:1620px"><div class="num">55</div><svg class="ti" viewBox="0 0 24 18"><use href="#i-audio"/></svg><div class="b" style="left:196px;width:40px;border-radius:6px 0 0 6px">M</div><div class="b" style="left:238px;width:40px;border-radius:0 6px 6px 0">S</div><div class="b" style="left:290px;width:40px;border-radius:6px 0 0 6px"><svg class="abs" style="left:10px;top:5px" width="20" height="20" viewBox="0 0 20 20"><use href="#i-snow"/></svg></div><div class="b" style="left:332px;width:40px;border-radius:0">R</div><div class="b" style="left:374px;width:40px;border-radius:0 6px 6px 0">I</div><div class="nm" style="letter-spacing:0.75px">Vocals<span class="u">_</span>Harm</div><div class="dot"></div></div><div class="row" style="top:1650px"><div class="num">56</div><svg class="ti" viewBox="0 0 24 18"><use href="#i-audio"/></svg><div class="b" style="left:196px;width:40px;border-radius:6px 0 0 6px">M</div><div class="b" style="left:238px;width:40px;border-radius:0 6px 6px 0">S</div><div class="b" style="left:290px;width:40px;border-radius:6px 0 0 6px"><svg class="abs" style="left:10px;top:5px" width="20" height="20" viewBox="0 0 20 20"><use href="#i-snow"/></svg></div><div class="b" style="left:332px;width:40px;border-radius:0">R</div><div class="b" style="left:374px;width:40px;border-radius:0 6px 6px 0">I</div><div class="nm" style="letter-spacing:0.75px">Vocals<span class="u">_</span>Harm</div><div class="dot"></div></div><div class="row" style="top:1680px"><div class="num">57</div><svg class="ti" viewBox="0 0 24 18"><use href="#i-audio"/></svg><div class="b" style="left:196px;width:40px;border-radius:6px 0 0 6px">M</div><div class="b" style="left:238px;width:40px;border-radius:0 6px 6px 0">S</div><div class="b" style="left:290px;width:40px;border-radius:6px 0 0 6px"><svg class="abs" style="left:10px;top:5px" width="20" height="20" viewBox="0 0 20 20"><use href="#i-snow"/></svg></div><div class="b" style="left:332px;width:40px;border-radius:0">R</div><div class="b" style="left:374px;width:40px;border-radius:0 6px 6px 0">I</div><div class="nm" style="letter-spacing:0.23px">Vox<span class="u">_</span>Main1</div><div class="dot"></div></div><div class="row" style="top:1710px"><div class="num">58</div><svg class="ti" viewBox="0 0 24 18"><use href="#i-audio"/></svg><div class="b" style="left:196px;width:40px;border-radius:6px 0 0 6px">M</div><div class="b" style="left:238px;width:40px;border-radius:0 6px 6px 0">S</div><div class="b" style="left:290px;width:40px;border-radius:6px 0 0 6px"><svg class="abs" style="left:10px;top:5px" width="20" height="20" viewBox="0 0 20 20"><use href="#i-snow"/></svg></div><div class="b" style="left:332px;width:40px;border-radius:0">R</div><div class="b" style="left:374px;width:40px;border-radius:0 6px 6px 0">I</div><div class="nm" style="letter-spacing:0.57px">Vox<span class="u">_</span>Main2</div><div class="dot"></div></div><div class="row" style="top:1740px"><div class="num">59</div><svg class="ti" viewBox="0 0 24 18"><use href="#i-audio"/></svg><div class="b" style="left:196px;width:40px;border-radius:6px 0 0 6px">M</div><div class="b" style="left:238px;width:40px;border-radius:0 6px 6px 0">S</div><div class="b" style="left:290px;width:40px;border-radius:6px 0 0 6px"><svg class="abs" style="left:10px;top:5px" width="20" height="20" viewBox="0 0 20 20"><use href="#i-snow"/></svg></div><div class="b" style="left:332px;width:40px;border-radius:0">R</div><div class="b" style="left:374px;width:40px;border-radius:0 6px 6px 0">I</div><div class="nm" style="letter-spacing:0.57px">Vox<span class="u">_</span>Main3</div><div class="dot"></div></div><div class="row" style="top:1770px"><div class="num">60</div><svg class="ti" viewBox="0 0 24 18"><use href="#i-audio"/></svg><div class="b" style="left:196px;width:40px;border-radius:6px 0 0 6px">M</div><div class="b" style="left:238px;width:40px;border-radius:0 6px 6px 0">S</div><div class="b" style="left:290px;width:40px;border-radius:6px 0 0 6px"><svg class="abs" style="left:10px;top:5px" width="20" height="20" viewBox="0 0 20 20"><use href="#i-snow"/></svg></div><div class="b" style="left:332px;width:40px;border-radius:0">R</div><div class="b" style="left:374px;width:40px;border-radius:0 6px 6px 0">I</div><div class="nm" style="letter-spacing:0.64px">Vox<span class="u">_</span>Harm</div><div class="dot"></div></div><div class="row" style="top:1800px"><div class="num">61</div><svg class="ti" viewBox="0 0 24 18"><use href="#i-audio"/></svg><div class="b" style="left:196px;width:40px;border-radius:6px 0 0 6px">M</div><div class="b" style="left:238px;width:40px;border-radius:0 6px 6px 0">S</div><div class="b" style="left:290px;width:40px;border-radius:6px 0 0 6px"><svg class="abs" style="left:10px;top:5px" width="20" height="20" viewBox="0 0 20 20"><use href="#i-snow"/></svg></div><div class="b" style="left:332px;width:40px;border-radius:0">R</div><div class="b" style="left:374px;width:40px;border-radius:0 6px 6px 0">I</div><div class="nm" style="letter-spacing:0.64px">Vox<span class="u">_</span>Harm</div><div class="dot"></div></div><div class="row" style="top:1830px"><div class="num">62</div><svg class="ti" viewBox="0 0 24 18"><use href="#i-knob"/></svg><div class="b" style="left:196px;width:40px;border-radius:6px 0 0 6px">M</div><div class="b" style="left:238px;width:40px;border-radius:0 6px 6px 0">S</div><div class="nm" style="letter-spacing:0.77px">Kick</div><div class="dot"></div></div><div class="row" style="top:1860px"><div class="num">63</div><svg class="ti" viewBox="0 0 24 18"><use href="#i-knob"/></svg><div class="b" style="left:196px;width:40px;border-radius:6px 0 0 6px">M</div><div class="b" style="left:238px;width:40px;border-radius:0 6px 6px 0">S</div><div class="nm" style="letter-spacing:0.18px">Snare</div><div class="dot"></div></div></div><div id="ruler"><div class="abs" style="left:0;top:0;width:3402px;height:38px;background:#565656"></div><div class="abs" style="left:0;top:0;width:93.08px;height:38px;background:#323232"></div><div class="abs" style="left:0;top:0;width:3402px;height:.500px;background:#3a3a3a"></div><div class="abs" style="left:0;top:37px;width:3402px;height:2px;background:#1c1c1c"></div><svg class="abs" style="left:439.4px;top:39px" width="2962.6" height="36" ><path d="M0 12 L23 0 L2962.6 0 L2962.6 36 L0 36 Z" fill="#3c3c3c"/><path d="M0 12 L23 0" stroke="#222" stroke-width="1.500"/></svg><svg class="abs" style="left:0;top:0" width="3402" height="75"><path d="M9.00 5 L9.00 75" stroke="#8a8a8a" stroke-width="2"/><path d="M19.76 59 L19.76 75" stroke="#7a7a7a" stroke-width="2"/><path d="M30.52 59 L30.52 75" stroke="#7a7a7a" stroke-width="2"/><path d="M41.28 59 L41.28 75" stroke="#7a7a7a" stroke-width="2"/><path d="M52.04 41 L52.04 75" stroke="#7e7e7e" stroke-width="2"/><path d="M62.80 59 L62.80 75" stroke="#7a7a7a" stroke-width="2"/><path d="M73.56 59 L73.56 75" stroke="#7a7a7a" stroke-width="2"/><path d="M84.32 59 L84.32 75" stroke="#7a7a7a" stroke-width="2"/><path d="M95.08 41 L95.08 75" stroke="#7e7e7e" stroke-width="2"/><path d="M105.84 59 L105.84 75" stroke="#7a7a7a" stroke-width="2"/><path d="M116.60 59 L116.60 75" stroke="#7a7a7a" stroke-width="2"/><path d="M127.36 59 L127.36 75" stroke="#7a7a7a" stroke-width="2"/><path d="M138.12 41 L138.12 75" stroke="#7e7e7e" stroke-width="2"/><path d="M148.88 59 L148.88 75" stroke="#7a7a7a" stroke-width="2"/><path d="M159.64 59 L159.64 75" stroke="#7a7a7a" stroke-width="2"/><path d="M170.40 59 L170.40 75" stroke="#7a7a7a" stroke-width="2"/><path d="M181.16 5 L181.16 75" stroke="#8a8a8a" stroke-width="2"/><path d="M191.92 59 L191.92 75" stroke="#7a7a7a" stroke-width="2"/><path d="M202.68 59 L202.68 75" stroke="#7a7a7a" stroke-width="2"/><path d="M213.44 59 L213.44 75" stroke="#7a7a7a" stroke-width="2"/><path d="M224.20 41 L224.20 75" stroke="#7e7e7e" stroke-width="2"/><path d="M234.96 59 L234.96 75" stroke="#7a7a7a" stroke-width="2"/><path d="M245.72 59 L245.72 75" stroke="#7a7a7a" stroke-width="2"/><path d="M256.48 59 L256.48 75" stroke="#7a7a7a" stroke-width="2"/><path d="M267.24 41 L267.24 75" stroke="#7e7e7e" stroke-width="2"/><path d="M278.00 59 L278.00 75" stroke="#7a7a7a" stroke-width="2"/><path d="M288.76 59 L288.76 75" stroke="#7a7a7a" stroke-width="2"/><path d="M299.52 59 L299.52 75" stroke="#7a7a7a" stroke-width="2"/><path d="M310.28 41 L310.28 75" stroke="#7e7e7e" stroke-width="2"/><path d="M321.04 59 L321.04 75" stroke="#7a7a7a" stroke-width="2"/><path d="M331.80 59 L331.80 75" stroke="#7a7a7a" stroke-width="2"/><path d="M342.56 59 L342.56 75" stroke="#7a7a7a" stroke-width="2"/><path d="M353.32 5 L353.32 75" stroke="#8a8a8a" stroke-width="2"/><path d="M364.08 59 L364.08 75" stroke="#7a7a7a" stroke-width="2"/><path d="M374.84 59 L374.84 75" stroke="#7a7a7a" stroke-width="2"/><path d="M385.60 59 L385.60 75" stroke="#7a7a7a" stroke-width="2"/><path d="M396.36 41 L396.36 75" stroke="#7e7e7e" stroke-width="2"/><path d="M407.12 59 L407.12 75" stroke="#7a7a7a" stroke-width="2"/><path d="M417.88 59 L417.88 75" stroke="#7a7a7a" stroke-width="2"/><path d="M428.64 59 L428.64 75" stroke="#7a7a7a" stroke-width="2"/><path d="M439.40 41 L439.40 75" stroke="#7e7e7e" stroke-width="2"/><path d="M450.16 59 L450.16 75" stroke="#7a7a7a" stroke-width="2"/><path d="M460.92 59 L460.92 75" stroke="#7a7a7a" stroke-width="2"/><path d="M471.68 59 L471.68 75" stroke="#7a7a7a" stroke-width="2"/><path d="M482.44 41 L482.44 75" stroke="#7e7e7e" stroke-width="2"/><path d="M493.20 59 L493.20 75" stroke="#7a7a7a" stroke-width="2"/><path d="M503.96 59 L503.96 75" stroke="#7a7a7a" stroke-width="2"/><path d="M514.72 59 L514.72 75" stroke="#7a7a7a" stroke-width="2"/><path d="M525.48 5 L525.48 75" stroke="#8a8a8a" stroke-width="2"/><path d="M536.24 59 L536.24 75" stroke="#7a7a7a" stroke-width="2"/><path d="M547.00 59 L547.00 75" stroke="#7a7a7a" stroke-width="2"/><path d="M557.76 59 L557.76 75" stroke="#7a7a7a" stroke-width="2"/><path d="M568.52 41 L568.52 75" stroke="#7e7e7e" stroke-width="2"/><path d="M579.28 59 L579.28 75" stroke="#7a7a7a" stroke-width="2"/><path d="M590.04 59 L590.04 75" stroke="#7a7a7a" stroke-width="2"/><path d="M600.80 59 L600.80 75" stroke="#7a7a7a" stroke-width="2"/><path d="M611.56 41 L611.56 75" stroke="#7e7e7e" stroke-width="2"/><path d="M622.32 59 L622.32 75" stroke="#7a7a7a" stroke-width="2"/><path d="M633.08 59 L633.08 75" stroke="#7a7a7a" stroke-width="2"/><path d="M643.84 59 L643.84 75" stroke="#7a7a7a" stroke-width="2"/><path d="M654.60 41 L654.60 75" stroke="#7e7e7e" stroke-width="2"/><path d="M665.36 59 L665.36 75" stroke="#7a7a7a" stroke-width="2"/><path d="M676.12 59 L676.12 75" stroke="#7a7a7a" stroke-width="2"/><path d="M686.88 59 L686.88 75" stroke="#7a7a7a" stroke-width="2"/><path d="M697.64 5 L697.64 75" stroke="#8a8a8a" stroke-width="2"/><path d="M708.40 59 L708.40 75" stroke="#7a7a7a" stroke-width="2"/><path d="M719.16 59 L719.16 75" stroke="#7a7a7a" stroke-width="2"/><path d="M729.92 59 L729.92 75" stroke="#7a7a7a" stroke-width="2"/><path d="M740.68 41 L740.68 75" stroke="#7e7e7e" stroke-width="2"/><path d="M751.44 59 L751.44 75" stroke="#7a7a7a" stroke-width="2"/><path d="M762.20 59 L762.20 75" stroke="#7a7a7a" stroke-width="2"/><path d="M772.96 59 L772.96 75" stroke="#7a7a7a" stroke-width="2"/><path d="M783.72 41 L783.72 75" stroke="#7e7e7e" stroke-width="2"/><path d="M794.48 59 L794.48 75" stroke="#7a7a7a" stroke-width="2"/><path d="M805.24 59 L805.24 75" stroke="#7a7a7a" stroke-width="2"/><path d="M816.00 59 L816.00 75" stroke="#7a7a7a" stroke-width="2"/><path d="M826.76 41 L826.76 75" stroke="#7e7e7e" stroke-width="2"/><path d="M837.52 59 L837.52 75" stroke="#7a7a7a" stroke-width="2"/><path d="M848.28 59 L848.28 75" stroke="#7a7a7a" stroke-width="2"/><path d="M859.04 59 L859.04 75" stroke="#7a7a7a" stroke-width="2"/><path d="M869.80 5 L869.80 75" stroke="#8a8a8a" stroke-width="2"/><path d="M880.56 59 L880.56 75" stroke="#7a7a7a" stroke-width="2"/><path d="M891.32 59 L891.32 75" stroke="#7a7a7a" stroke-width="2"/><path d="M902.08 59 L902.08 75" stroke="#7a7a7a" stroke-width="2"/><path d="M912.84 41 L912.84 75" stroke="#7e7e7e" stroke-width="2"/><path d="M923.60 59 L923.60 75" stroke="#7a7a7a" stroke-width="2"/><path d="M934.36 59 L934.36 75" stroke="#7a7a7a" stroke-width="2"/><path d="M945.12 59 L945.12 75" stroke="#7a7a7a" stroke-width="2"/><path d="M955.88 41 L955.88 75" stroke="#7e7e7e" stroke-width="2"/><path d="M966.64 59 L966.64 75" stroke="#7a7a7a" stroke-width="2"/><path d="M977.40 59 L977.40 75" stroke="#7a7a7a" stroke-width="2"/><path d="M988.16 59 L988.16 75" stroke="#7a7a7a" stroke-width="2"/><path d="M998.92 41 L998.92 75" stroke="#7e7e7e" stroke-width="2"/><path d="M1009.68 59 L1009.68 75" stroke="#7a7a7a" stroke-width="2"/><path d="M1020.44 59 L1020.44 75" stroke="#7a7a7a" stroke-width="2"/><path d="M1031.20 59 L1031.20 75" stroke="#7a7a7a" stroke-width="2"/><path d="M1041.96 5 L1041.96 75" stroke="#8a8a8a" stroke-width="2"/><path d="M1052.72 59 L1052.72 75" stroke="#7a7a7a" stroke-width="2"/><path d="M1063.48 59 L1063.48 75" stroke="#7a7a7a" stroke-width="2"/><path d="M1074.24 59 L1074.24 75" stroke="#7a7a7a" stroke-width="2"/><path d="M1085.00 41 L1085.00 75" stroke="#7e7e7e" stroke-width="2"/><path d="M1095.76 59 L1095.76 75" stroke="#7a7a7a" stroke-width="2"/><path d="M1106.52 59 L1106.52 75" stroke="#7a7a7a" stroke-width="2"/><path d="M1117.28 59 L1117.28 75" stroke="#7a7a7a" stroke-width="2"/><path d="M1128.04 41 L1128.04 75" stroke="#7e7e7e" stroke-width="2"/><path d="M1138.80 59 L1138.80 75" stroke="#7a7a7a" stroke-width="2"/><path d="M1149.56 59 L1149.56 75" stroke="#7a7a7a" stroke-width="2"/><path d="M1160.32 59 L1160.32 75" stroke="#7a7a7a" stroke-width="2"/><path d="M1171.08 41 L1171.08 75" stroke="#7e7e7e" stroke-width="2"/><path d="M1181.84 59 L1181.84 75" stroke="#7a7a7a" stroke-width="2"/><path d="M1192.60 59 L1192.60 75" stroke="#7a7a7a" stroke-width="2"/><path d="M1203.36 59 L1203.36 75" stroke="#7a7a7a" stroke-width="2"/><path d="M1214.12 5 L1214.12 75" stroke="#8a8a8a" stroke-width="2"/><path d="M1224.88 59 L1224.88 75" stroke="#7a7a7a" stroke-width="2"/><path d="M1235.64 59 L1235.64 75" stroke="#7a7a7a" stroke-width="2"/><path d="M1246.40 59 L1246.40 75" stroke="#7a7a7a" stroke-width="2"/><path d="M1257.16 41 L1257.16 75" stroke="#7e7e7e" stroke-width="2"/><path d="M1267.92 59 L1267.92 75" stroke="#7a7a7a" stroke-width="2"/><path d="M1278.68 59 L1278.68 75" stroke="#7a7a7a" stroke-width="2"/><path d="M1289.44 59 L1289.44 75" stroke="#7a7a7a" stroke-width="2"/><path d="M1300.20 41 L1300.20 75" stroke="#7e7e7e" stroke-width="2"/><path d="M1310.96 59 L1310.96 75" stroke="#7a7a7a" stroke-width="2"/><path d="M1321.72 59 L1321.72 75" stroke="#7a7a7a" stroke-width="2"/><path d="M1332.48 59 L1332.48 75" stroke="#7a7a7a" stroke-width="2"/><path d="M1343.24 41 L1343.24 75" stroke="#7e7e7e" stroke-width="2"/><path d="M1354.00 59 L1354.00 75" stroke="#7a7a7a" stroke-width="2"/><path d="M1364.76 59 L1364.76 75" stroke="#7a7a7a" stroke-width="2"/><path d="M1375.52 59 L1375.52 75" stroke="#7a7a7a" stroke-width="2"/><path d="M1386.28 5 L1386.28 75" stroke="#8a8a8a" stroke-width="2"/><path d="M1397.04 59 L1397.04 75" stroke="#7a7a7a" stroke-width="2"/><path d="M1407.80 59 L1407.80 75" stroke="#7a7a7a" stroke-width="2"/><path d="M1418.56 59 L1418.56 75" stroke="#7a7a7a" stroke-width="2"/><path d="M1429.32 41 L1429.32 75" stroke="#7e7e7e" stroke-width="2"/><path d="M1440.08 59 L1440.08 75" stroke="#7a7a7a" stroke-width="2"/><path d="M1450.84 59 L1450.84 75" stroke="#7a7a7a" stroke-width="2"/><path d="M1461.60 59 L1461.60 75" stroke="#7a7a7a" stroke-width="2"/><path d="M1472.36 41 L1472.36 75" stroke="#7e7e7e" stroke-width="2"/><path d="M1483.12 59 L1483.12 75" stroke="#7a7a7a" stroke-width="2"/><path d="M1493.88 59 L1493.88 75" stroke="#7a7a7a" stroke-width="2"/><path d="M1504.64 59 L1504.64 75" stroke="#7a7a7a" stroke-width="2"/><path d="M1515.40 41 L1515.40 75" stroke="#7e7e7e" stroke-width="2"/><path d="M1526.16 59 L1526.16 75" stroke="#7a7a7a" stroke-width="2"/><path d="M1536.92 59 L1536.92 75" stroke="#7a7a7a" stroke-width="2"/><path d="M1547.68 59 L1547.68 75" stroke="#7a7a7a" stroke-width="2"/><path d="M1558.44 5 L1558.44 75" stroke="#8a8a8a" stroke-width="2"/><path d="M1569.20 59 L1569.20 75" stroke="#7a7a7a" stroke-width="2"/><path d="M1579.96 59 L1579.96 75" stroke="#7a7a7a" stroke-width="2"/><path d="M1590.72 59 L1590.72 75" stroke="#7a7a7a" stroke-width="2"/><path d="M1601.48 41 L1601.48 75" stroke="#7e7e7e" stroke-width="2"/><path d="M1612.24 59 L1612.24 75" stroke="#7a7a7a" stroke-width="2"/><path d="M1623.00 59 L1623.00 75" stroke="#7a7a7a" stroke-width="2"/><path d="M1633.76 59 L1633.76 75" stroke="#7a7a7a" stroke-width="2"/><path d="M1644.52 41 L1644.52 75" stroke="#7e7e7e" stroke-width="2"/><path d="M1655.28 59 L1655.28 75" stroke="#7a7a7a" stroke-width="2"/><path d="M1666.04 59 L1666.04 75" stroke="#7a7a7a" stroke-width="2"/><path d="M1676.80 59 L1676.80 75" stroke="#7a7a7a" stroke-width="2"/><path d="M1687.56 41 L1687.56 75" stroke="#7e7e7e" stroke-width="2"/><path d="M1698.32 59 L1698.32 75" stroke="#7a7a7a" stroke-width="2"/><path d="M1709.08 59 L1709.08 75" stroke="#7a7a7a" stroke-width="2"/><path d="M1719.84 59 L1719.84 75" stroke="#7a7a7a" stroke-width="2"/><path d="M1730.60 5 L1730.60 75" stroke="#8a8a8a" stroke-width="2"/><path d="M1741.36 59 L1741.36 75" stroke="#7a7a7a" stroke-width="2"/><path d="M1752.12 59 L1752.12 75" stroke="#7a7a7a" stroke-width="2"/><path d="M1762.88 59 L1762.88 75" stroke="#7a7a7a" stroke-width="2"/><path d="M1773.64 41 L1773.64 75" stroke="#7e7e7e" stroke-width="2"/><path d="M1784.40 59 L1784.40 75" stroke="#7a7a7a" stroke-width="2"/><path d="M1795.16 59 L1795.16 75" stroke="#7a7a7a" stroke-width="2"/><path d="M1805.92 59 L1805.92 75" stroke="#7a7a7a" stroke-width="2"/><path d="M1816.68 41 L1816.68 75" stroke="#7e7e7e" stroke-width="2"/><path d="M1827.44 59 L1827.44 75" stroke="#7a7a7a" stroke-width="2"/><path d="M1838.20 59 L1838.20 75" stroke="#7a7a7a" stroke-width="2"/><path d="M1848.96 59 L1848.96 75" stroke="#7a7a7a" stroke-width="2"/><path d="M1859.72 41 L1859.72 75" stroke="#7e7e7e" stroke-width="2"/><path d="M1870.48 59 L1870.48 75" stroke="#7a7a7a" stroke-width="2"/><path d="M1881.24 59 L1881.24 75" stroke="#7a7a7a" stroke-width="2"/><path d="M1892.00 59 L1892.00 75" stroke="#7a7a7a" stroke-width="2"/><path d="M1902.76 5 L1902.76 75" stroke="#8a8a8a" stroke-width="2"/><path d="M1913.52 59 L1913.52 75" stroke="#7a7a7a" stroke-width="2"/><path d="M1924.28 59 L1924.28 75" stroke="#7a7a7a" stroke-width="2"/><path d="M1935.04 59 L1935.04 75" stroke="#7a7a7a" stroke-width="2"/><path d="M1945.80 41 L1945.80 75" stroke="#7e7e7e" stroke-width="2"/><path d="M1956.56 59 L1956.56 75" stroke="#7a7a7a" stroke-width="2"/><path d="M1967.32 59 L1967.32 75" stroke="#7a7a7a" stroke-width="2"/><path d="M1978.08 59 L1978.08 75" stroke="#7a7a7a" stroke-width="2"/><path d="M1988.84 41 L1988.84 75" stroke="#7e7e7e" stroke-width="2"/><path d="M1999.60 59 L1999.60 75" stroke="#7a7a7a" stroke-width="2"/><path d="M2010.36 59 L2010.36 75" stroke="#7a7a7a" stroke-width="2"/><path d="M2021.12 59 L2021.12 75" stroke="#7a7a7a" stroke-width="2"/><path d="M2031.88 41 L2031.88 75" stroke="#7e7e7e" stroke-width="2"/><path d="M2042.64 59 L2042.64 75" stroke="#7a7a7a" stroke-width="2"/><path d="M2053.40 59 L2053.40 75" stroke="#7a7a7a" stroke-width="2"/><path d="M2064.16 59 L2064.16 75" stroke="#7a7a7a" stroke-width="2"/><path d="M2074.92 5 L2074.92 75" stroke="#8a8a8a" stroke-width="2"/><path d="M2085.68 59 L2085.68 75" stroke="#7a7a7a" stroke-width="2"/><path d="M2096.44 59 L2096.44 75" stroke="#7a7a7a" stroke-width="2"/><path d="M2107.20 59 L2107.20 75" stroke="#7a7a7a" stroke-width="2"/><path d="M2117.96 41 L2117.96 75" stroke="#7e7e7e" stroke-width="2"/><path d="M2128.72 59 L2128.72 75" stroke="#7a7a7a" stroke-width="2"/><path d="M2139.48 59 L2139.48 75" stroke="#7a7a7a" stroke-width="2"/><path d="M2150.24 59 L2150.24 75" stroke="#7a7a7a" stroke-width="2"/><path d="M2161.00 41 L2161.00 75" stroke="#7e7e7e" stroke-width="2"/><path d="M2171.76 59 L2171.76 75" stroke="#7a7a7a" stroke-width="2"/><path d="M2182.52 59 L2182.52 75" stroke="#7a7a7a" stroke-width="2"/><path d="M2193.28 59 L2193.28 75" stroke="#7a7a7a" stroke-width="2"/><path d="M2204.04 41 L2204.04 75" stroke="#7e7e7e" stroke-width="2"/><path d="M2214.80 59 L2214.80 75" stroke="#7a7a7a" stroke-width="2"/><path d="M2225.56 59 L2225.56 75" stroke="#7a7a7a" stroke-width="2"/><path d="M2236.32 59 L2236.32 75" stroke="#7a7a7a" stroke-width="2"/><path d="M2247.08 5 L2247.08 75" stroke="#8a8a8a" stroke-width="2"/><path d="M2257.84 59 L2257.84 75" stroke="#7a7a7a" stroke-width="2"/><path d="M2268.60 59 L2268.60 75" stroke="#7a7a7a" stroke-width="2"/><path d="M2279.36 59 L2279.36 75" stroke="#7a7a7a" stroke-width="2"/><path d="M2290.12 41 L2290.12 75" stroke="#7e7e7e" stroke-width="2"/><path d="M2300.88 59 L2300.88 75" stroke="#7a7a7a" stroke-width="2"/><path d="M2311.64 59 L2311.64 75" stroke="#7a7a7a" stroke-width="2"/><path d="M2322.40 59 L2322.40 75" stroke="#7a7a7a" stroke-width="2"/><path d="M2333.16 41 L2333.16 75" stroke="#7e7e7e" stroke-width="2"/><path d="M2343.92 59 L2343.92 75" stroke="#7a7a7a" stroke-width="2"/><path d="M2354.68 59 L2354.68 75" stroke="#7a7a7a" stroke-width="2"/><path d="M2365.44 59 L2365.44 75" stroke="#7a7a7a" stroke-width="2"/><path d="M2376.20 41 L2376.20 75" stroke="#7e7e7e" stroke-width="2"/><path d="M2386.96 59 L2386.96 75" stroke="#7a7a7a" stroke-width="2"/><path d="M2397.72 59 L2397.72 75" stroke="#7a7a7a" stroke-width="2"/><path d="M2408.48 59 L2408.48 75" stroke="#7a7a7a" stroke-width="2"/><path d="M2419.24 5 L2419.24 75" stroke="#8a8a8a" stroke-width="2"/><path d="M2430.00 59 L2430.00 75" stroke="#7a7a7a" stroke-width="2"/><path d="M2440.76 59 L2440.76 75" stroke="#7a7a7a" stroke-width="2"/><path d="M2451.52 59 L2451.52 75" stroke="#7a7a7a" stroke-width="2"/><path d="M2462.28 41 L2462.28 75" stroke="#7e7e7e" stroke-width="2"/><path d="M2473.04 59 L2473.04 75" stroke="#7a7a7a" stroke-width="2"/><path d="M2483.80 59 L2483.80 75" stroke="#7a7a7a" stroke-width="2"/><path d="M2494.56 59 L2494.56 75" stroke="#7a7a7a" stroke-width="2"/><path d="M2505.32 41 L2505.32 75" stroke="#7e7e7e" stroke-width="2"/><path d="M2516.08 59 L2516.08 75" stroke="#7a7a7a" stroke-width="2"/><path d="M2526.84 59 L2526.84 75" stroke="#7a7a7a" stroke-width="2"/><path d="M2537.60 59 L2537.60 75" stroke="#7a7a7a" stroke-width="2"/><path d="M2548.36 41 L2548.36 75" stroke="#7e7e7e" stroke-width="2"/><path d="M2559.12 59 L2559.12 75" stroke="#7a7a7a" stroke-width="2"/><path d="M2569.88 59 L2569.88 75" stroke="#7a7a7a" stroke-width="2"/><path d="M2580.64 59 L2580.64 75" stroke="#7a7a7a" stroke-width="2"/><path d="M2591.40 5 L2591.40 75" stroke="#8a8a8a" stroke-width="2"/><path d="M2602.16 59 L2602.16 75" stroke="#7a7a7a" stroke-width="2"/><path d="M2612.92 59 L2612.92 75" stroke="#7a7a7a" stroke-width="2"/><path d="M2623.68 59 L2623.68 75" stroke="#7a7a7a" stroke-width="2"/><path d="M2634.44 41 L2634.44 75" stroke="#7e7e7e" stroke-width="2"/><path d="M2645.20 59 L2645.20 75" stroke="#7a7a7a" stroke-width="2"/><path d="M2655.96 59 L2655.96 75" stroke="#7a7a7a" stroke-width="2"/><path d="M2666.72 59 L2666.72 75" stroke="#7a7a7a" stroke-width="2"/><path d="M2677.48 41 L2677.48 75" stroke="#7e7e7e" stroke-width="2"/><path d="M2688.24 59 L2688.24 75" stroke="#7a7a7a" stroke-width="2"/><path d="M2699.00 59 L2699.00 75" stroke="#7a7a7a" stroke-width="2"/><path d="M2709.76 59 L2709.76 75" stroke="#7a7a7a" stroke-width="2"/><path d="M2720.52 41 L2720.52 75" stroke="#7e7e7e" stroke-width="2"/><path d="M2731.28 59 L2731.28 75" stroke="#7a7a7a" stroke-width="2"/><path d="M2742.04 59 L2742.04 75" stroke="#7a7a7a" stroke-width="2"/><path d="M2752.80 59 L2752.80 75" stroke="#7a7a7a" stroke-width="2"/><path d="M2763.56 5 L2763.56 75" stroke="#8a8a8a" stroke-width="2"/><path d="M2774.32 59 L2774.32 75" stroke="#7a7a7a" stroke-width="2"/><path d="M2785.08 59 L2785.08 75" stroke="#7a7a7a" stroke-width="2"/><path d="M2795.84 59 L2795.84 75" stroke="#7a7a7a" stroke-width="2"/><path d="M2806.60 41 L2806.60 75" stroke="#7e7e7e" stroke-width="2"/><path d="M2817.36 59 L2817.36 75" stroke="#7a7a7a" stroke-width="2"/><path d="M2828.12 59 L2828.12 75" stroke="#7a7a7a" stroke-width="2"/><path d="M2838.88 59 L2838.88 75" stroke="#7a7a7a" stroke-width="2"/><path d="M2849.64 41 L2849.64 75" stroke="#7e7e7e" stroke-width="2"/><path d="M2860.40 59 L2860.40 75" stroke="#7a7a7a" stroke-width="2"/><path d="M2871.16 59 L2871.16 75" stroke="#7a7a7a" stroke-width="2"/><path d="M2881.92 59 L2881.92 75" stroke="#7a7a7a" stroke-width="2"/><path d="M2892.68 41 L2892.68 75" stroke="#7e7e7e" stroke-width="2"/><path d="M2903.44 59 L2903.44 75" stroke="#7a7a7a" stroke-width="2"/><path d="M2914.20 59 L2914.20 75" stroke="#7a7a7a" stroke-width="2"/><path d="M2924.96 59 L2924.96 75" stroke="#7a7a7a" stroke-width="2"/><path d="M2935.72 5 L2935.72 75" stroke="#8a8a8a" stroke-width="2"/><path d="M2946.48 59 L2946.48 75" stroke="#7a7a7a" stroke-width="2"/><path d="M2957.24 59 L2957.24 75" stroke="#7a7a7a" stroke-width="2"/><path d="M2968.00 59 L2968.00 75" stroke="#7a7a7a" stroke-width="2"/><path d="M2978.76 41 L2978.76 75" stroke="#7e7e7e" stroke-width="2"/><path d="M2989.52 59 L2989.52 75" stroke="#7a7a7a" stroke-width="2"/><path d="M3000.28 59 L3000.28 75" stroke="#7a7a7a" stroke-width="2"/><path d="M3011.04 59 L3011.04 75" stroke="#7a7a7a" stroke-width="2"/><path d="M3021.80 41 L3021.80 75" stroke="#7e7e7e" stroke-width="2"/><path d="M3032.56 59 L3032.56 75" stroke="#7a7a7a" stroke-width="2"/><path d="M3043.32 59 L3043.32 75" stroke="#7a7a7a" stroke-width="2"/><path d="M3054.08 59 L3054.08 75" stroke="#7a7a7a" stroke-width="2"/><path d="M3064.84 41 L3064.84 75" stroke="#7e7e7e" stroke-width="2"/><path d="M3075.60 59 L3075.60 75" stroke="#7a7a7a" stroke-width="2"/><path d="M3086.36 59 L3086.36 75" stroke="#7a7a7a" stroke-width="2"/><path d="M3097.12 59 L3097.12 75" stroke="#7a7a7a" stroke-width="2"/><path d="M3107.88 5 L3107.88 75" stroke="#8a8a8a" stroke-width="2"/><path d="M3118.64 59 L3118.64 75" stroke="#7a7a7a" stroke-width="2"/><path d="M3129.40 59 L3129.40 75" stroke="#7a7a7a" stroke-width="2"/><path d="M3140.16 59 L3140.16 75" stroke="#7a7a7a" stroke-width="2"/><path d="M3150.92 41 L3150.92 75" stroke="#7e7e7e" stroke-width="2"/><path d="M3161.68 59 L3161.68 75" stroke="#7a7a7a" stroke-width="2"/><path d="M3172.44 59 L3172.44 75" stroke="#7a7a7a" stroke-width="2"/><path d="M3183.20 59 L3183.20 75" stroke="#7a7a7a" stroke-width="2"/><path d="M3193.96 41 L3193.96 75" stroke="#7e7e7e" stroke-width="2"/><path d="M3204.72 59 L3204.72 75" stroke="#7a7a7a" stroke-width="2"/><path d="M3215.48 59 L3215.48 75" stroke="#7a7a7a" stroke-width="2"/><path d="M3226.24 59 L3226.24 75" stroke="#7a7a7a" stroke-width="2"/><path d="M3237.00 41 L3237.00 75" stroke="#7e7e7e" stroke-width="2"/><path d="M3247.76 59 L3247.76 75" stroke="#7a7a7a" stroke-width="2"/><path d="M3258.52 59 L3258.52 75" stroke="#7a7a7a" stroke-width="2"/><path d="M3269.28 59 L3269.28 75" stroke="#7a7a7a" stroke-width="2"/><path d="M3280.04 5 L3280.04 75" stroke="#8a8a8a" stroke-width="2"/><path d="M3290.80 59 L3290.80 75" stroke="#7a7a7a" stroke-width="2"/><path d="M3301.56 59 L3301.56 75" stroke="#7a7a7a" stroke-width="2"/><path d="M3312.32 59 L3312.32 75" stroke="#7a7a7a" stroke-width="2"/><path d="M3323.08 41 L3323.08 75" stroke="#7e7e7e" stroke-width="2"/><path d="M3333.84 59 L3333.84 75" stroke="#7a7a7a" stroke-width="2"/><path d="M3344.60 59 L3344.60 75" stroke="#7a7a7a" stroke-width="2"/><path d="M3355.36 59 L3355.36 75" stroke="#7a7a7a" stroke-width="2"/><path d="M3366.12 41 L3366.12 75" stroke="#7e7e7e" stroke-width="2"/><path d="M3376.88 59 L3376.88 75" stroke="#7a7a7a" stroke-width="2"/><path d="M3387.64 59 L3387.64 75" stroke="#7a7a7a" stroke-width="2"/><path d="M3398.40 59 L3398.40 75" stroke="#7a7a7a" stroke-width="2"/><path d="M3409.16 41 L3409.16 75" stroke="#7e7e7e" stroke-width="2"/><path d="M3419.92 59 L3419.92 75" stroke="#7a7a7a" stroke-width="2"/><path d="M3430.68 59 L3430.68 75" stroke="#7a7a7a" stroke-width="2"/><path d="M3441.44 59 L3441.44 75" stroke="#7a7a7a" stroke-width="2"/></svg><div class="rn" style="left:14.5px">1</div><div class="rn" style="left:187.96px">5</div><div class="rn" style="left:360.12px">9</div><div class="rn" style="left:532.28px">13</div><div class="rn" style="left:704.44px">17</div><div class="rn" style="left:876.6px">21</div><div class="rn" style="left:1048.76px">25</div><div class="rn" style="left:1220.92px">29</div><div class="rn" style="left:1393.08px">33</div><div class="rn" style="left:1565.24px">37</div><div class="rn" style="left:1737.4px">41</div><div class="rn" style="left:1909.56px">45</div><div class="rn" style="left:2081.72px">49</div><div class="rn" style="left:2253.88px">53</div><div class="rn" style="left:2426.04px">57</div><div class="rn" style="left:2598.2px">61</div><div class="rn" style="left:2770.36px">65</div><div class="rn" style="left:2942.52px">69</div><div class="rn" style="left:3114.68px">73</div><div class="rn" style="left:3286.84px">77</div><div class="abs" style="left:456.5px;top:45px;font-size:21.500px;line-height:26px;color:#e2e2e2;letter-spacing:.4px;white-space:nowrap">Marker 1</div><div class="abs" style="left:8px;top:1px;width:2px;height:37px;background:repeating-linear-gradient(to bottom,#9a9a9a 0,#9a9a9a 1.500px,#1e1e1e 1.500px,#1e1e1e 3.600px)"></div><svg class="abs" style="left:0;top:10px" width="8" height="14"><path d="M0 0 L6 7 L0 14 Z" fill="#484848"/></svg><div class="abs" style="left:0;top:73.500px;width:3402px;height:2px;background:#141414"></div><svg class="abs" style="left:0;top:39px" width="30" height="36"><path d="M0 0 L22 0 Q26 0 26 4 L26 19 L9 34 L0 26 Z" fill="#b9b9b9"/></svg><div class="abs" style="left:8px;top:45px;width:2.500px;height:30px;background:#fff"></div></div><div id="arr"><svg class="abs" style="left:0;top:0" width="3402" height="1886"><path d="M0 29.5 L3402 29.5" stroke="#252525" stroke-width="2"/><path d="M0 59.5 L3402 59.5" stroke="#252525" stroke-width="2"/><path d="M0 89.5 L3402 89.5" stroke="#252525" stroke-width="2"/><path d="M0 119.5 L3402 119.5" stroke="#252525" stroke-width="2"/><path d="M0 149.5 L3402 149.5" stroke="#252525" stroke-width="2"/><path d="M0 179.5 L3402 179.5" stroke="#252525" stroke-width="2"/><path d="M0 209.5 L3402 209.5" stroke="#252525" stroke-width="2"/><path d="M0 239.5 L3402 239.5" stroke="#252525" stroke-width="2"/><path d="M0 269.5 L3402 269.5" stroke="#252525" stroke-width="2"/><path d="M0 299.5 L3402 299.5" stroke="#252525" stroke-width="2"/><path d="M0 329.5 L3402 329.5" stroke="#252525" stroke-width="2"/><path d="M0 359.5 L3402 359.5" stroke="#252525" stroke-width="2"/><path d="M0 389.5 L3402 389.5" stroke="#252525" stroke-width="2"/><path d="M0 419.5 L3402 419.5" stroke="#252525" stroke-width="2"/><path d="M0 449.5 L3402 449.5" stroke="#252525" stroke-width="2"/><path d="M0 479.5 L3402 479.5" stroke="#252525" stroke-width="2"/><path d="M0 509.5 L3402 509.5" stroke="#252525" stroke-width="2"/><path d="M0 539.5 L3402 539.5" stroke="#252525" stroke-width="2"/><path d="M0 569.5 L3402 569.5" stroke="#252525" stroke-width="2"/><path d="M0 599.5 L3402 599.5" stroke="#252525" stroke-width="2"/><path d="M0 629.5 L3402 629.5" stroke="#252525" stroke-width="2"/><path d="M0 659.5 L3402 659.5" stroke="#252525" stroke-width="2"/><path d="M0 689.5 L3402 689.5" stroke="#252525" stroke-width="2"/><path d="M0 719.5 L3402 719.5" stroke="#252525" stroke-width="2"/><path d="M0 749.5 L3402 749.5" stroke="#252525" stroke-width="2"/><path d="M0 779.5 L3402 779.5" stroke="#252525" stroke-width="2"/><path d="M0 809.5 L3402 809.5" stroke="#252525" stroke-width="2"/><path d="M0 839.5 L3402 839.5" stroke="#252525" stroke-width="2"/><path d="M0 869.5 L3402 869.5" stroke="#252525" stroke-width="2"/><path d="M0 899.5 L3402 899.5" stroke="#252525" stroke-width="2"/><path d="M0 929.5 L3402 929.5" stroke="#252525" stroke-width="2"/><path d="M0 959.5 L3402 959.5" stroke="#252525" stroke-width="2"/><path d="M0 989.5 L3402 989.5" stroke="#252525" stroke-width="2"/><path d="M0 1019.5 L3402 1019.5" stroke="#252525" stroke-width="2"/><path d="M0 1049.5 L3402 1049.5" stroke="#252525" stroke-width="2"/><path d="M0 1079.5 L3402 1079.5" stroke="#252525" stroke-width="2"/><path d="M0 1109.5 L3402 1109.5" stroke="#252525" stroke-width="2"/><path d="M0 1139.5 L3402 1139.5" stroke="#252525" stroke-width="2"/><path d="M0 1169.5 L3402 1169.5" stroke="#252525" stroke-width="2"/><path d="M0 1199.5 L3402 1199.5" stroke="#252525" stroke-width="2"/><path d="M0 1229.5 L3402 1229.5" stroke="#252525" stroke-width="2"/><path d="M0 1259.5 L3402 1259.5" stroke="#252525" stroke-width="2"/><path d="M0 1289.5 L3402 1289.5" stroke="#252525" stroke-width="2"/><path d="M0 1319.5 L3402 1319.5" stroke="#252525" stroke-width="2"/><path d="M0 1349.5 L3402 1349.5" stroke="#252525" stroke-width="2"/><path d="M0 1379.5 L3402 1379.5" stroke="#252525" stroke-width="2"/><path d="M0 1409.5 L3402 1409.5" stroke="#252525" stroke-width="2"/><path d="M0 1439.5 L3402 1439.5" stroke="#252525" stroke-width="2"/><path d="M0 1469.5 L3402 1469.5" stroke="#252525" stroke-width="2"/><path d="M0 1499.5 L3402 1499.5" stroke="#252525" stroke-width="2"/><path d="M0 1529.5 L3402 1529.5" stroke="#252525" stroke-width="2"/><path d="M0 1559.5 L3402 1559.5" stroke="#252525" stroke-width="2"/><path d="M0 1589.5 L3402 1589.5" stroke="#252525" stroke-width="2"/><path d="M0 1619.5 L3402 1619.5" stroke="#252525" stroke-width="2"/><path d="M0 1649.5 L3402 1649.5" stroke="#252525" stroke-width="2"/><path d="M0 1679.5 L3402 1679.5" stroke="#252525" stroke-width="2"/><path d="M0 1709.5 L3402 1709.5" stroke="#252525" stroke-width="2"/><path d="M0 1739.5 L3402 1739.5" stroke="#252525" stroke-width="2"/><path d="M0 1769.5 L3402 1769.5" stroke="#252525" stroke-width="2"/><path d="M0 1799.5 L3402 1799.5" stroke="#252525" stroke-width="2"/><path d="M0 1829.5 L3402 1829.5" stroke="#252525" stroke-width="2"/><path d="M0 1859.5 L3402 1859.5" stroke="#252525" stroke-width="2"/><path d="M0 1889.5 L3402 1889.5" stroke="#252525" stroke-width="2"/><path d="M9.00 0 L9.00 1886" stroke="#464646" stroke-width="2"/><path d="M52.04 0 L52.04 1886" stroke="#464646" stroke-width="2"/><path d="M95.08 0 L95.08 1886" stroke="#464646" stroke-width="2"/><path d="M138.12 0 L138.12 1886" stroke="#464646" stroke-width="2"/><path d="M181.16 0 L181.16 1886" stroke="#464646" stroke-width="2"/><path d="M224.20 0 L224.20 1886" stroke="#464646" stroke-width="2"/><path d="M267.24 0 L267.24 1886" stroke="#464646" stroke-width="2"/><path d="M310.28 0 L310.28 1886" stroke="#464646" stroke-width="2"/><path d="M353.32 0 L353.32 1886" stroke="#464646" stroke-width="2"/><path d="M396.36 0 L396.36 1886" stroke="#464646" stroke-width="2"/><path d="M439.40 0 L439.40 1886" stroke="#464646" stroke-width="2"/><path d="M482.44 0 L482.44 1886" stroke="#464646" stroke-width="2"/><path d="M525.48 0 L525.48 1886" stroke="#464646" stroke-width="2"/><path d="M568.52 0 L568.52 1886" stroke="#464646" stroke-width="2"/><path d="M611.56 0 L611.56 1886" stroke="#464646" stroke-width="2"/><path d="M654.60 0 L654.60 1886" stroke="#464646" stroke-width="2"/><path d="M697.64 0 L697.64 1886" stroke="#464646" stroke-width="2"/><path d="M740.68 0 L740.68 1886" stroke="#464646" stroke-width="2"/><path d="M783.72 0 L783.72 1886" stroke="#464646" stroke-width="2"/><path d="M826.76 0 L826.76 1886" stroke="#464646" stroke-width="2"/><path d="M869.80 0 L869.80 1886" stroke="#464646" stroke-width="2"/><path d="M912.84 0 L912.84 1886" stroke="#464646" stroke-width="2"/><path d="M955.88 0 L955.88 1886" stroke="#464646" stroke-width="2"/><path d="M998.92 0 L998.92 1886" stroke="#464646" stroke-width="2"/><path d="M1041.96 0 L1041.96 1886" stroke="#464646" stroke-width="2"/><path d="M1085.00 0 L1085.00 1886" stroke="#464646" stroke-width="2"/><path d="M1128.04 0 L1128.04 1886" stroke="#464646" stroke-width="2"/><path d="M1171.08 0 L1171.08 1886" stroke="#464646" stroke-width="2"/><path d="M1214.12 0 L1214.12 1886" stroke="#464646" stroke-width="2"/><path d="M1257.16 0 L1257.16 1886" stroke="#464646" stroke-width="2"/><path d="M1300.20 0 L1300.20 1886" stroke="#464646" stroke-width="2"/><path d="M1343.24 0 L1343.24 1886" stroke="#464646" stroke-width="2"/><path d="M1386.28 0 L1386.28 1886" stroke="#464646" stroke-width="2"/><path d="M1429.32 0 L1429.32 1886" stroke="#464646" stroke-width="2"/><path d="M1472.36 0 L1472.36 1886" stroke="#464646" stroke-width="2"/><path d="M1515.40 0 L1515.40 1886" stroke="#464646" stroke-width="2"/><path d="M1558.44 0 L1558.44 1886" stroke="#464646" stroke-width="2"/><path d="M1601.48 0 L1601.48 1886" stroke="#464646" stroke-width="2"/><path d="M1644.52 0 L1644.52 1886" stroke="#464646" stroke-width="2"/><path d="M1687.56 0 L1687.56 1886" stroke="#464646" stroke-width="2"/><path d="M1730.60 0 L1730.60 1886" stroke="#464646" stroke-width="2"/><path d="M1773.64 0 L1773.64 1886" stroke="#464646" stroke-width="2"/><path d="M1816.68 0 L1816.68 1886" stroke="#464646" stroke-width="2"/><path d="M1859.72 0 L1859.72 1886" stroke="#464646" stroke-width="2"/><path d="M1902.76 0 L1902.76 1886" stroke="#464646" stroke-width="2"/><path d="M1945.80 0 L1945.80 1886" stroke="#464646" stroke-width="2"/><path d="M1988.84 0 L1988.84 1886" stroke="#464646" stroke-width="2"/><path d="M2031.88 0 L2031.88 1886" stroke="#464646" stroke-width="2"/><path d="M2074.92 0 L2074.92 1886" stroke="#464646" stroke-width="2"/><path d="M2117.96 0 L2117.96 1886" stroke="#464646" stroke-width="2"/><path d="M2161.00 0 L2161.00 1886" stroke="#464646" stroke-width="2"/><path d="M2204.04 0 L2204.04 1886" stroke="#464646" stroke-width="2"/><path d="M2247.08 0 L2247.08 1886" stroke="#464646" stroke-width="2"/><path d="M2290.12 0 L2290.12 1886" stroke="#464646" stroke-width="2"/><path d="M2333.16 0 L2333.16 1886" stroke="#464646" stroke-width="2"/><path d="M2376.20 0 L2376.20 1886" stroke="#464646" stroke-width="2"/><path d="M2419.24 0 L2419.24 1886" stroke="#464646" stroke-width="2"/><path d="M2462.28 0 L2462.28 1886" stroke="#464646" stroke-width="2"/><path d="M2505.32 0 L2505.32 1886" stroke="#464646" stroke-width="2"/><path d="M2548.36 0 L2548.36 1886" stroke="#464646" stroke-width="2"/><path d="M2591.40 0 L2591.40 1886" stroke="#464646" stroke-width="2"/><path d="M2634.44 0 L2634.44 1886" stroke="#464646" stroke-width="2"/><path d="M2677.48 0 L2677.48 1886" stroke="#464646" stroke-width="2"/><path d="M2720.52 0 L2720.52 1886" stroke="#464646" stroke-width="2"/><path d="M2763.56 0 L2763.56 1886" stroke="#464646" stroke-width="2"/><path d="M2806.60 0 L2806.60 1886" stroke="#464646" stroke-width="2"/><path d="M2849.64 0 L2849.64 1886" stroke="#464646" stroke-width="2"/><path d="M2892.68 0 L2892.68 1886" stroke="#464646" stroke-width="2"/><path d="M2935.72 0 L2935.72 1886" stroke="#464646" stroke-width="2"/><path d="M2978.76 0 L2978.76 1886" stroke="#464646" stroke-width="2"/><path d="M3021.80 0 L3021.80 1886" stroke="#464646" stroke-width="2"/><path d="M3064.84 0 L3064.84 1886" stroke="#464646" stroke-width="2"/><path d="M3107.88 0 L3107.88 1886" stroke="#464646" stroke-width="2"/><path d="M3150.92 0 L3150.92 1886" stroke="#464646" stroke-width="2"/><path d="M3193.96 0 L3193.96 1886" stroke="#464646" stroke-width="2"/><path d="M3237.00 0 L3237.00 1886" stroke="#464646" stroke-width="2"/><path d="M3280.04 0 L3280.04 1886" stroke="#464646" stroke-width="2"/><path d="M3323.08 0 L3323.08 1886" stroke="#464646" stroke-width="2"/><path d="M3366.12 0 L3366.12 1886" stroke="#464646" stroke-width="2"/><path d="M3409.16 0 L3409.16 1886" stroke="#464646" stroke-width="2"/></svg><div class="abs" style="left:0;top:0;width:9px;height:1886px;background:#222"></div><div class="rg" style="left:94.33px;top:0px;width:3412.42px;background:#C85A11;color:#FFE9D6"><div class="rt" style="left:11px;letter-spacing:0.25px">DRUM</div><div class="rt" style="left:2059px;letter-spacing:0.25px">DRUM</div></div><div class="rg" style="left:266.49px;top:30px;width:2626.94px;background:#1BA3A6;color:#E3FFFF"><div class="rt" style="left:11px;letter-spacing:0.38px">Pad Mellow<span class="u">_</span>1</div><div class="rt" style="left:2059px;letter-spacing:0.38px">Pad Mellow<span class="u">_</span>1</div></div><div class="rg" style="left:266.49px;top:90px;width:2626.94px;background:#1BA3A6;color:#E3FFFF"><div class="rt" style="left:11px;letter-spacing:0.90px">Pad<span class="u">_</span>mellow<span class="u">_</span>3</div><div class="rt" style="left:2059px;letter-spacing:0.90px">Pad<span class="u">_</span>mellow<span class="u">_</span>3</div></div><div class="rg" style="left:266.49px;top:120px;width:2626.94px;background:#1BA3A6;color:#E3FFFF"><div class="rt" style="left:11px;letter-spacing:0.91px">Organ</div><div class="rt" style="left:2059px;letter-spacing:0.91px">Organ</div></div><div class="rg" style="left:223.45px;top:150px;width:388.86px;background:#1BA3A6;color:#E3FFFF"><div class="rt" style="left:11px;letter-spacing:0.54px">Piano</div></div><div class="rg" style="left:1879.75px;top:180px;width:109.60px;background:#5A3DB6;color:#F0EAFF"><div class="rt" style="left:11px;letter-spacing:0.97px">Swell<span class="u">_</span>bi</div></div><div class="rg" style="left:1944.05px;top:210px;width:87.70px;background:#5A3DB6;color:#F0EAFF"><div class="rt" style="left:11px;letter-spacing:0.46px">FX<span class="u">_</span>Sw</div></div><div class="rg" style="left:2450.45px;top:210px;width:87.70px;background:#5A3DB6;color:#F0EAFF"><div class="rt" style="left:11px;letter-spacing:0.46px">FX<span class="u">_</span>Sw</div></div><div class="rg" style="left:2536.65px;top:240px;width:399.30px;background:#5A3DB6;color:#F0EAFF"><div class="rt" style="left:11px;letter-spacing:0.81px">FX<span class="u">_</span>Sixxler.2<svg width="29" height="19" viewBox="0 0 29 19"><circle cx="9.500" cy="9.500" r="8.100" fill="none" stroke="currentColor" stroke-width="1.800"/><circle cx="19.500" cy="9.500" r="8.100" fill="none" stroke="currentColor" stroke-width="1.800"/></svg></div></div><div class="rg" style="left:2030.25px;top:270px;width:483.50px;background:#5A3DB6;color:#F0EAFF"><div class="rt" style="left:11px;letter-spacing:0.40px">Bass Drop 1.1<svg width="29" height="19" viewBox="0 0 29 19"><circle cx="9.500" cy="9.500" r="8.100" fill="none" stroke="currentColor" stroke-width="1.800"/><circle cx="19.500" cy="9.500" r="8.100" fill="none" stroke="currentColor" stroke-width="1.800"/></svg></div></div><div class="rg" style="left:2052.15px;top:300px;width:137.50px;background:#5A3DB6;color:#F0EAFF"><div class="rt" style="left:11px;letter-spacing:1.14px">static snare</div></div><div class="rg" style="left:2030.25px;top:330px;width:163.10px;background:#5A3DB6;color:#F0EAFF"><div class="rt" style="left:11px;letter-spacing:0.09px">FX<span class="u">_</span>Snare<span class="u">_</span>1.1</div></div><div class="rg" style="left:2030.25px;top:360px;width:137.50px;background:#5A3DB6;color:#F0EAFF"><div class="rt" style="left:11px;letter-spacing:0.12px">BOS<span class="u">_</span>TDB<span class="u">_</span>1</div></div><div class="rg" style="left:2030.25px;top:390px;width:23.50px;background:#5A3DB6;color:#F0EAFF"></div><div class="rg" style="left:2074.05px;top:390px;width:23.70px;background:#5A3DB6;color:#F0EAFF"></div><div class="rg" style="left:2115.95px;top:390px;width:23.80px;background:#5A3DB6;color:#F0EAFF"></div><div class="rg" style="left:2160.25px;top:390px;width:22.90px;background:#5A3DB6;color:#F0EAFF"></div><div class="rg" style="left:2047.95px;top:420px;width:145.40px;background:#5A3DB6;color:#F0EAFF"><div class="rt" style="left:11px;letter-spacing:0.84px">FX<span class="u">_</span>Noise<span class="u">_</span>7</div></div><div class="rg" style="left:2449.95px;top:450px;width:18.30px;background:#5A3DB6;color:#F0EAFF"></div><div class="rg" style="left:94.33px;top:540px;width:3412.42px;background:#322C62;color:#C9C2EC"><div class="rt" style="left:11px;letter-spacing:1.19px">Modern Rock Template song writing1.2<span class="u">_</span>15#05 merged<span class="u">_</span>bip merged<span class="u">_</span>3.5<svg width="19" height="19" viewBox="0 0 19 19"><circle cx="9.500" cy="9.500" r="8.100" fill="none" stroke="currentColor" stroke-width="1.800"/></svg></div><div class="rt" style="left:2059px;letter-spacing:1.19px">Modern Rock Template song writing1.2<span class="u">_</span>15#05 merged<span class="u">_</span>bip merged<span class="u">_</span>3.5<svg width="19" height="19" viewBox="0 0 19 19"><circle cx="9.500" cy="9.500" r="8.100" fill="none" stroke="currentColor" stroke-width="1.800"/></svg></div></div><div class="rg" style="left:94.33px;top:600px;width:3412.42px;background:#322C62;color:#C9C2EC"><div class="rt" style="left:11px;letter-spacing:1.13px">Modern Rock Template song writing1.2<span class="u">_</span>15#05 merged<span class="u">_</span>bip merged<span class="u">_</span>3.1<svg width="19" height="19" viewBox="0 0 19 19"><circle cx="9.500" cy="9.500" r="8.100" fill="none" stroke="currentColor" stroke-width="1.800"/></svg></div><div class="rt" style="left:2059px;letter-spacing:1.13px">Modern Rock Template song writing1.2<span class="u">_</span>15#05 merged<span class="u">_</span>bip merged<span class="u">_</span>3.1<svg width="19" height="19" viewBox="0 0 19 19"><circle cx="9.500" cy="9.500" r="8.100" fill="none" stroke="currentColor" stroke-width="1.800"/></svg></div></div><div class="rg" style="left:2030.25px;top:630px;width:87.40px;background:#6A1F7E;color:#F3DCF9"><div class="rt" style="left:11px;letter-spacing:0.16px">GTR1#</div></div><div class="rg" style="left:2116.15px;top:630px;width:79.30px;background:#6A1F7E;color:#F3DCF9"><div class="rt" style="left:11px;letter-spacing:-0.60px">GTR1</div></div><div class="rg" style="left:2030.25px;top:660px;width:165.20px;background:#6A1F7E;color:#F3DCF9"><div class="rt" style="left:11px;letter-spacing:0.60px">GTR1#31 mer</div></div><div class="rg" style="left:94.33px;top:690px;width:3412.42px;background:#6A1F7E;color:#F3DCF9"><div class="rt" style="left:11px;letter-spacing:0.93px">GTR1#100 merged<span class="u">_</span>2<svg width="19" height="19" viewBox="0 0 19 19"><circle cx="9.500" cy="9.500" r="8.100" fill="none" stroke="currentColor" stroke-width="1.800"/></svg></div><div class="rt" style="left:2059px;letter-spacing:0.93px">GTR1#100 merged<span class="u">_</span>2<svg width="19" height="19" viewBox="0 0 19 19"><circle cx="9.500" cy="9.500" r="8.100" fill="none" stroke="currentColor" stroke-width="1.800"/></svg></div></div><div class="rg" style="left:94.33px;top:720px;width:3412.42px;background:#6A1F7E;color:#F3DCF9"><div class="rt" style="left:11px;letter-spacing:1.08px">GTR1#99 merged<span class="u">_</span>2<svg width="19" height="19" viewBox="0 0 19 19"><circle cx="9.500" cy="9.500" r="8.100" fill="none" stroke="currentColor" stroke-width="1.800"/></svg></div><div class="rt" style="left:2059px;letter-spacing:1.08px">GTR1#99 merged<span class="u">_</span>2<svg width="19" height="19" viewBox="0 0 19 19"><circle cx="9.500" cy="9.500" r="8.100" fill="none" stroke="currentColor" stroke-width="1.800"/></svg></div></div><div class="rg" style="left:94.33px;top:810px;width:3412.42px;background:#6A1F7E;color:#F3DCF9"><div class="rt" style="left:11px;letter-spacing:0.90px">GTR1#100 merged<span class="u">_</span>3<svg width="19" height="19" viewBox="0 0 19 19"><circle cx="9.500" cy="9.500" r="8.100" fill="none" stroke="currentColor" stroke-width="1.800"/></svg></div><div class="rt" style="left:2059px;letter-spacing:0.90px">GTR1#100 merged<span class="u">_</span>3<svg width="19" height="19" viewBox="0 0 19 19"><circle cx="9.500" cy="9.500" r="8.100" fill="none" stroke="currentColor" stroke-width="1.800"/></svg></div></div><div class="rg" style="left:94.33px;top:840px;width:3412.42px;background:#6A1F7E;color:#F3DCF9"><div class="rt" style="left:11px;letter-spacing:1.05px">GTR1#99 merged<span class="u">_</span>3<svg width="19" height="19" viewBox="0 0 19 19"><circle cx="9.500" cy="9.500" r="8.100" fill="none" stroke="currentColor" stroke-width="1.800"/></svg></div><div class="rt" style="left:2059px;letter-spacing:1.05px">GTR1#99 merged<span class="u">_</span>3<svg width="19" height="19" viewBox="0 0 19 19"><circle cx="9.500" cy="9.500" r="8.100" fill="none" stroke="currentColor" stroke-width="1.800"/></svg></div></div><div class="rg" style="left:92.65px;top:870px;width:1078.90px;background:#8E2DD0;color:#F6E6FF"><div class="rt" style="left:11px;letter-spacing:1.22px">Riff Lead#02 merged<svg width="19" height="19" viewBox="0 0 19 19"><circle cx="9.500" cy="9.500" r="8.100" fill="none" stroke="currentColor" stroke-width="1.800"/></svg></div></div><div class="rg" style="left:92.65px;top:930px;width:1078.90px;background:#8E2DD0;color:#F6E6FF"><div class="rt" style="left:11px;letter-spacing:1.23px">Riff Lead#02 merged.4<svg width="19" height="19" viewBox="0 0 19 19"><circle cx="9.500" cy="9.500" r="8.100" fill="none" stroke="currentColor" stroke-width="1.800"/></svg></div></div><div class="rg" style="left:652.55px;top:1020px;width:2606.70px;background:#8E2DD0;color:#F6E6FF"><div class="rt" style="left:11px;letter-spacing:0.55px">GTR1#77 merged<span class="u">_</span>1<svg width="19" height="19" viewBox="0 0 19 19"><circle cx="9.500" cy="9.500" r="8.100" fill="none" stroke="currentColor" stroke-width="1.800"/></svg></div><div class="rt" style="left:2059px;letter-spacing:0.55px">GTR1#77 merged<span class="u">_</span>1<svg width="19" height="19" viewBox="0 0 19 19"><circle cx="9.500" cy="9.500" r="8.100" fill="none" stroke="currentColor" stroke-width="1.800"/></svg></div></div><div class="rg" style="left:652.55px;top:1050px;width:2606.70px;background:#8E2DD0;color:#F6E6FF"><div class="rt" style="left:11px;letter-spacing:0.80px">GTR1#105 merged<svg width="19" height="19" viewBox="0 0 19 19"><circle cx="9.500" cy="9.500" r="8.100" fill="none" stroke="currentColor" stroke-width="1.800"/></svg></div><div class="rt" style="left:2059px;letter-spacing:0.80px">GTR1#105 merged<svg width="19" height="19" viewBox="0 0 19 19"><circle cx="9.500" cy="9.500" r="8.100" fill="none" stroke="currentColor" stroke-width="1.800"/></svg></div></div><div class="rg" style="left:1512.35px;top:1080px;width:175.80px;background:#8A1BA6;color:#F9E3FF"><div class="rt" style="left:11px;letter-spacing:0.83px">GTR1#32 merg</div></div><div class="rg" style="left:396.35px;top:1110px;width:217.60px;background:#8A1BA6;color:#F9E3FF"><div class="rt" style="left:11px;letter-spacing:0.80px">GTR1#105 merged</div></div><div class="rg" style="left:2546.45px;top:1140px;width:347.10px;background:#8A1BA6;color:#F9E3FF"><div class="rt" style="left:11px;letter-spacing:1.34px">Intro filter#02 merged.3<svg width="19" height="19" viewBox="0 0 19 19"><circle cx="9.500" cy="9.500" r="8.100" fill="none" stroke="currentColor" stroke-width="1.800"/></svg></div></div><div class="rg" style="left:1168.15px;top:1170px;width:347.60px;background:#8A1BA6;color:#F9E3FF"><div class="rt" style="left:11px;letter-spacing:0.95px">GTR<span class="u">_</span>Clean<span class="u">_</span>3#03 merged.1</div></div><div class="rg" style="left:2190.65px;top:1260px;width:1316.10px;background:#543482;color:#EBDFFA"><div class="rt" style="left:11px;letter-spacing:1.06px">TRACKING#425 merged<svg width="19" height="19" viewBox="0 0 19 19"><circle cx="9.500" cy="9.500" r="8.100" fill="none" stroke="currentColor" stroke-width="1.800"/></svg></div></div><div class="rg" style="left:2190.65px;top:1290px;width:1316.10px;background:#543482;color:#EBDFFA"><div class="rt" style="left:11px;letter-spacing:1.09px">TRACKING#426 merged<svg width="19" height="19" viewBox="0 0 19 19"><circle cx="9.500" cy="9.500" r="8.100" fill="none" stroke="currentColor" stroke-width="1.800"/></svg></div></div><div class="rg" style="left:820.25px;top:1320px;width:2463.20px;background:#543482;color:#EBDFFA"><div class="rt" style="left:11px;letter-spacing:0.87px">TRACKING#493 merged<span class="u">_</span>1<svg width="19" height="19" viewBox="0 0 19 19"><circle cx="9.500" cy="9.500" r="8.100" fill="none" stroke="currentColor" stroke-width="1.800"/></svg></div><div class="rt" style="left:2059px;letter-spacing:0.87px">TRACKING#493 merged<span class="u">_</span>1<svg width="19" height="19" viewBox="0 0 19 19"><circle cx="9.500" cy="9.500" r="8.100" fill="none" stroke="currentColor" stroke-width="1.800"/></svg></div></div><div class="rg" style="left:820.25px;top:1350px;width:2463.20px;background:#543482;color:#EBDFFA"><div class="rt" style="left:11px;letter-spacing:1.09px">TRACKING#492 merged<span class="u">_</span>2<svg width="19" height="19" viewBox="0 0 19 19"><circle cx="9.500" cy="9.500" r="8.100" fill="none" stroke="currentColor" stroke-width="1.800"/></svg></div><div class="rt" style="left:2059px;letter-spacing:1.09px">TRACKING#492 merged<span class="u">_</span>2<svg width="19" height="19" viewBox="0 0 19 19"><circle cx="9.500" cy="9.500" r="8.100" fill="none" stroke="currentColor" stroke-width="1.800"/></svg></div></div><div class="rg" style="left:582.65px;top:1380px;width:950.80px;background:#543482;color:#EBDFFA"><div class="rt" style="left:11px;letter-spacing:1.06px">TRACKING#340 merged<svg width="19" height="19" viewBox="0 0 19 19"><circle cx="9.500" cy="9.500" r="8.100" fill="none" stroke="currentColor" stroke-width="1.800"/></svg></div></div><div class="rg" style="left:582.65px;top:1410px;width:950.80px;background:#543482;color:#EBDFFA"><div class="rt" style="left:11px;letter-spacing:1.06px">TRACKING#343 merged<svg width="19" height="19" viewBox="0 0 19 19"><circle cx="9.500" cy="9.500" r="8.100" fill="none" stroke="currentColor" stroke-width="1.800"/></svg></div></div><div class="rg" style="left:1522.65px;top:1440px;width:171.10px;background:#543482;color:#EBDFFA"><div class="rt" style="left:11px;letter-spacing:0.46px">TRACKING#21</div></div><div class="rg" style="left:1522.65px;top:1470px;width:171.10px;background:#543482;color:#EBDFFA"><div class="rt" style="left:11px;letter-spacing:0.46px">TRACKING#21</div></div><div class="rg" style="left:274.75px;top:1500px;width:315.00px;background:#543482;color:#EBDFFA"><div class="rt" style="left:11px;letter-spacing:0.92px">TRACKING#118 merged<span class="u">_</span>bip</div></div><div class="rg" style="left:2528.25px;top:1530px;width:371.40px;background:#543482;color:#EBDFFA"><div class="rt" style="left:11px;letter-spacing:0.91px">TRACKING#225 merged<span class="u">_</span>bip<span class="u">_</span>1</div></div><div class="rg" style="left:1180.75px;top:1560px;width:349.00px;background:#543482;color:#EBDFFA"><div class="rt" style="left:11px;letter-spacing:0.96px">TRACKING#162 merged<span class="u">_</span>bip</div></div><div class="rg" style="left:1180.75px;top:1590px;width:349.00px;background:#543482;color:#EBDFFA"><div class="rt" style="left:11px;letter-spacing:0.91px">TRACKING#127 merged<span class="u">_</span>bip me</div></div><div class="rg" style="left:450.85px;top:1620px;width:1082.60px;background:#8E2DD0;color:#F6E6FF"><div class="rt" style="left:11px;letter-spacing:0.80px">TRACKING#414<span class="u">_</span>bip merged<span class="u">_</span>1<svg width="19" height="19" viewBox="0 0 19 19"><circle cx="9.500" cy="9.500" r="8.100" fill="none" stroke="currentColor" stroke-width="1.800"/></svg></div></div><div class="rg" style="left:450.85px;top:1650px;width:1086.80px;background:#8E2DD0;color:#F6E6FF"><div class="rt" style="left:11px;letter-spacing:0.94px">TRACKING#413<span class="u">_</span>bip merged<svg width="19" height="19" viewBox="0 0 19 19"><circle cx="9.500" cy="9.500" r="8.100" fill="none" stroke="currentColor" stroke-width="1.800"/></svg></div></div><div class="rg" style="left:638.55px;top:1680px;width:2643.10px;background:#463885;color:#E3DCF7"><div class="rt" style="left:11px;letter-spacing:1.15px">TRACKING#54 merged<span class="u">_</span>bip merged<span class="u">_</span>3<svg width="19" height="19" viewBox="0 0 19 19"><circle cx="9.500" cy="9.500" r="8.100" fill="none" stroke="currentColor" stroke-width="1.800"/></svg></div><div class="rt" style="left:2059px;letter-spacing:1.15px">TRACKING#54 merged<span class="u">_</span>bip merged<span class="u">_</span>3<svg width="19" height="19" viewBox="0 0 19 19"><circle cx="9.500" cy="9.500" r="8.100" fill="none" stroke="currentColor" stroke-width="1.800"/></svg></div></div><div class="rg" style="left:638.55px;top:1710px;width:2643.10px;background:#463885;color:#E3DCF7"><div class="rt" style="left:11px;letter-spacing:1.16px">TRACKING#52 merged<span class="u">_</span>bip merged<span class="u">_</span>2<svg width="19" height="19" viewBox="0 0 19 19"><circle cx="9.500" cy="9.500" r="8.100" fill="none" stroke="currentColor" stroke-width="1.800"/></svg></div><div class="rt" style="left:2059px;letter-spacing:1.16px">TRACKING#52 merged<span class="u">_</span>bip merged<span class="u">_</span>2<svg width="19" height="19" viewBox="0 0 19 19"><circle cx="9.500" cy="9.500" r="8.100" fill="none" stroke="currentColor" stroke-width="1.800"/></svg></div></div><div class="rg" style="left:638.55px;top:1740px;width:2643.10px;background:#463885;color:#E3DCF7"><div class="rt" style="left:11px;letter-spacing:1.16px">TRACKING#50 merged<span class="u">_</span>bip merged<span class="u">_</span>2<svg width="19" height="19" viewBox="0 0 19 19"><circle cx="9.500" cy="9.500" r="8.100" fill="none" stroke="currentColor" stroke-width="1.800"/></svg></div><div class="rt" style="left:2059px;letter-spacing:1.16px">TRACKING#50 merged<span class="u">_</span>bip merged<span class="u">_</span>2<svg width="19" height="19" viewBox="0 0 19 19"><circle cx="9.500" cy="9.500" r="8.100" fill="none" stroke="currentColor" stroke-width="1.800"/></svg></div></div><div class="rg" style="left:640.85px;top:1770px;width:2644.50px;background:#8E2DD0;color:#F6E6FF"><div class="rt" style="left:11px;letter-spacing:0.89px">TRACKING#401 merged<span class="u">_</span>bip merged<span class="u">_</span>1<svg width="19" height="19" viewBox="0 0 19 19"><circle cx="9.500" cy="9.500" r="8.100" fill="none" stroke="currentColor" stroke-width="1.800"/></svg></div><div class="rt" style="left:2059px;letter-spacing:0.89px">TRACKING#401 merged<span class="u">_</span>bip merged<span class="u">_</span>1<svg width="19" height="19" viewBox="0 0 19 19"><circle cx="9.500" cy="9.500" r="8.100" fill="none" stroke="currentColor" stroke-width="1.800"/></svg></div></div><div class="rg" style="left:640.85px;top:1800px;width:2644.50px;background:#8E2DD0;color:#F6E6FF"><div class="rt" style="left:11px;letter-spacing:1.03px">TRACKING#386 merged<span class="u">_</span>bip merged<span class="u">_</span>1<svg width="19" height="19" viewBox="0 0 19 19"><circle cx="9.500" cy="9.500" r="8.100" fill="none" stroke="currentColor" stroke-width="1.800"/></svg></div><div class="rt" style="left:2059px;letter-spacing:1.03px">TRACKING#386 merged<span class="u">_</span>bip merged<span class="u">_</span>1<svg width="19" height="19" viewBox="0 0 19 19"><circle cx="9.500" cy="9.500" r="8.100" fill="none" stroke="currentColor" stroke-width="1.800"/></svg></div></div><div class="abs" style="left:8px;top:0;width:2.500px;height:1886px;background:#fff"></div><div class="abs" style="left:3370px;top:0;width:32px;height:1886px;background:rgba(255,255,255,.125)"></div><div class="abs" style="left:3375px;top:4px;width:22px;height:1206px;border-radius:11px;background:rgba(230,230,230,.62)"></div></div></div></body></html>
